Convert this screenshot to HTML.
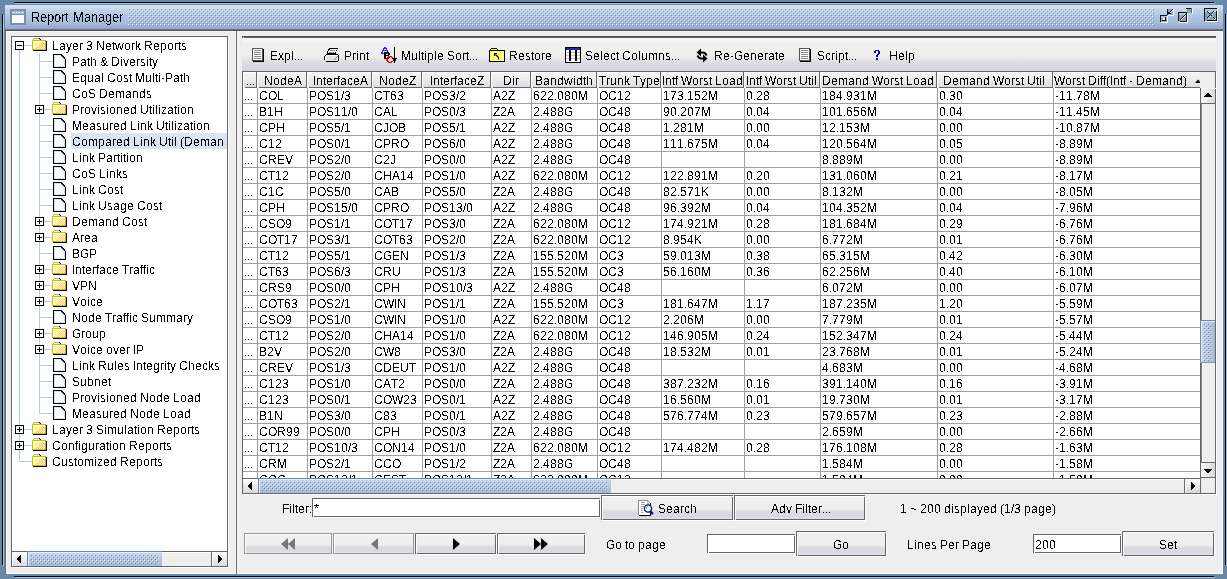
<!DOCTYPE html><html><head><meta charset="utf-8"><style>
*{margin:0;padding:0;box-sizing:border-box}
html,body{width:1227px;height:579px;overflow:hidden}
body{position:relative;background:#6589a6;font-family:"Liberation Sans",sans-serif;font-size:12px;color:#000}
.a{position:absolute}
svg.a{display:block}
.hc{position:absolute;top:0;height:16px;
 background:linear-gradient(to bottom,#f6f6f6 0px,#eeeeee 6px,#dcdde3 15px)}
</style></head><body>
<svg width="0" height="0" style="position:absolute"><defs><filter id="crisp" x="0" y="0" width="100%" height="100%" color-interpolation-filters="sRGB"><feComponentTransfer><feFuncA type="discrete" tableValues="0 0 0 0 0 0 0 0 0 0 1 1 1 1 1 1 1 1 1 1"/></feComponentTransfer></filter></defs></svg><div class="a" style="left:14px;top:2px;width:1200px;height:1px;background:#000"></div>
<div class="a" style="left:15px;top:3px;width:1200px;height:1px;background:#a6c2dc"></div>
<div class="a" style="left:14px;top:576px;width:1200px;height:1px;background:#000"></div>
<div class="a" style="left:15px;top:577px;width:1200px;height:1px;background:#a6c2dc"></div>
<div class="a" style="left:2px;top:14px;width:1px;height:551px;background:#000"></div>
<div class="a" style="left:3px;top:15px;width:1px;height:551px;background:#a6c2dc"></div>
<div class="a" style="left:1225px;top:14px;width:1px;height:551px;background:#000"></div>
<div class="a" style="left:1226px;top:15px;width:1px;height:551px;background:#a6c2dc"></div>
<div class="a" style="left:5px;top:5px;width:1218px;height:24px;background:linear-gradient(to bottom,#dae1f6 0px,#d3ddf2 1.5px,#cddaeb 3px,#bdd0e7 6px,#b0c6e3 11px,#aabedd 16px,#a3b4d7 20px,#95a5c8 24px)"></div>
<div class="a" style="left:5px;top:29px;width:1218px;height:1px;background:#62769a"></div>
<svg class="a" style="left:128px;top:8px" width="1026" height="18"><defs><pattern id="tb" width="4" height="4" patternUnits="userSpaceOnUse"><rect x="0" y="0" width="1" height="1" fill="#f4f7fc"/><rect x="2" y="2" width="1" height="1" fill="#f4f7fc"/><rect x="1" y="1" width="1" height="1" fill="#72849f"/><rect x="3" y="3" width="1" height="1" fill="#72849f"/></pattern></defs><rect width="1026" height="18" fill="url(#tb)"/></svg>
<svg class="a" style="left:10px;top:9px" width="16" height="16" shape-rendering="crispEdges"><rect x="0" y="0" width="16" height="16" rx="1" fill="#7790ab"/><rect x="2" y="2" width="12" height="3" fill="#a9bdd2"/><rect x="3" y="3" width="1" height="1" fill="#fff"/><rect x="6" y="3" width="1" height="1" fill="#fff"/><rect x="9" y="3" width="1" height="1" fill="#fff"/><rect x="12" y="3" width="1" height="1" fill="#fff"/><rect x="2" y="6" width="12" height="8" fill="#fbfcfe"/></svg>
<svg class="a" style="left:1158px;top:7px" width="62" height="17" shape-rendering="crispEdges"><rect x="2" y="8" width="7" height="1" fill="#111"/><rect x="2" y="8" width="1" height="7" fill="#111"/><rect x="3" y="9" width="6" height="6" fill="#8aa1bc"/><rect x="3" y="9" width="6" height="2" fill="#b4c6da"/><rect x="5" y="11" width="2" height="2" fill="#fff"/><rect x="7" y="10" width="1" height="4" fill="#111"/><rect x="4" y="13" width="4" height="1" fill="#111"/><rect x="9" y="9" width="1" height="7" fill="#fff"/><rect x="3" y="15" width="7" height="1" fill="#fff"/><rect x="10" y="2" width="5" height="6" fill="#8aa1bc"/><rect x="9" y="2" width="1" height="6" fill="#111"/><rect x="14" y="2" width="1" height="1" fill="#111"/><rect x="13" y="3" width="1" height="1" fill="#111"/><rect x="12" y="4" width="1" height="1" fill="#111"/><rect x="11" y="5" width="1" height="1" fill="#111"/><rect x="10" y="6" width="1" height="1" fill="#111"/><rect x="11" y="6" width="1" height="1" fill="#111"/><rect x="12" y="6" width="1" height="1" fill="#111"/><rect x="10" y="5" width="1" height="1" fill="#111"/><rect x="14" y="3" width="1" height="1" fill="#fff"/><rect x="13" y="4" width="1" height="1" fill="#fff"/><rect x="12" y="5" width="1" height="1" fill="#fff"/><rect x="15" y="2" width="1" height="7" fill="#fff"/><rect x="10" y="8" width="6" height="1" fill="#fff"/><rect x="20" y="5" width="9" height="1" fill="#111"/><rect x="20" y="5" width="1" height="9" fill="#111"/><rect x="21" y="6" width="8" height="8" fill="#8aa1bc"/><rect x="21" y="6" width="8" height="2" fill="#b4c6da"/><rect x="28" y="7" width="1" height="7" fill="#111"/><rect x="22" y="14" width="7" height="1" fill="#111"/><rect x="22" y="12" width="1" height="1" fill="#111"/><rect x="23" y="11" width="1" height="1" fill="#111"/><rect x="24" y="10" width="1" height="1" fill="#111"/><rect x="25" y="9" width="1" height="1" fill="#111"/><rect x="26" y="8" width="1" height="1" fill="#111"/><rect x="27" y="7" width="1" height="1" fill="#111"/><rect x="28" y="6" width="1" height="1" fill="#111"/><rect x="23" y="12" width="1" height="1" fill="#fff"/><rect x="24" y="11" width="1" height="1" fill="#fff"/><rect x="25" y="10" width="1" height="1" fill="#fff"/><rect x="26" y="9" width="1" height="1" fill="#fff"/><rect x="27" y="8" width="1" height="1" fill="#fff"/><rect x="29" y="6" width="1" height="9" fill="#fff"/><rect x="21" y="15" width="9" height="1" fill="#fff"/><rect x="29" y="2" width="5" height="4" fill="#8aa1bc"/><rect x="28" y="1" width="6" height="1" fill="#111"/><rect x="33" y="1" width="1" height="5" fill="#55667a"/><rect x="34" y="2" width="1" height="5" fill="#fff"/><rect x="46" y="1" width="13" height="1" fill="#111"/><rect x="46" y="1" width="1" height="13" fill="#111"/><rect x="47" y="2" width="12" height="12" fill="#8aa1bc"/><rect x="47" y="2" width="12" height="3" fill="#b4c6da"/><rect x="58" y="4" width="1" height="9" fill="#111"/><rect x="49" y="13" width="10" height="1" fill="#111"/><rect x="49" y="4" width="1" height="1" fill="#111"/><rect x="50" y="5" width="1" height="1" fill="#111"/><rect x="51" y="6" width="1" height="1" fill="#111"/><rect x="52" y="7" width="1" height="1" fill="#111"/><rect x="53" y="8" width="1" height="1" fill="#111"/><rect x="55" y="10" width="1" height="1" fill="#111"/><rect x="56" y="11" width="1" height="1" fill="#111"/><rect x="55" y="4" width="1" height="1" fill="#111"/><rect x="54" y="5" width="1" height="1" fill="#111"/><rect x="53" y="6" width="1" height="1" fill="#111"/><rect x="51" y="8" width="1" height="1" fill="#111"/><rect x="50" y="9" width="1" height="1" fill="#111"/><rect x="49" y="10" width="1" height="1" fill="#111"/><rect x="50" y="4" width="1" height="1" fill="#e8eef6"/><rect x="51" y="5" width="1" height="1" fill="#e8eef6"/><rect x="56" y="4" width="1" height="1" fill="#e8eef6"/><rect x="55" y="5" width="1" height="1" fill="#e8eef6"/><rect x="54" y="7" width="1" height="1" fill="#e8eef6"/><rect x="56" y="12" width="1" height="1" fill="#e8eef6"/><rect x="57" y="11" width="1" height="1" fill="#e8eef6"/><rect x="50" y="11" width="1" height="1" fill="#e8eef6"/><rect x="52" y="9" width="1" height="1" fill="#e8eef6"/><rect x="59" y="2" width="1" height="13" fill="#fff"/><rect x="47" y="14" width="13" height="1" fill="#fff"/></svg>
<div class="a" style="left:5px;top:30px;width:1218px;height:544px;background:#eeeeee"></div>
<div class="a" style="left:5px;top:30px;width:1218px;height:1px;background:#555"></div>
<div class="a" style="left:5px;top:30px;width:1px;height:544px;background:#6b6b6b"></div>
<div class="a" style="left:6px;top:573px;width:1217px;height:1px;background:#fff"></div>
<div class="a" style="left:1222px;top:31px;width:1px;height:543px;background:#fff"></div>
<div class="a" style="left:6px;top:31px;width:1216px;height:1px;background:#f8f8f8"></div>
<div class="a" style="left:6px;top:31px;width:1px;height:542px;background:#f8f8f8"></div>
<div class="a" style="left:12px;top:37px;width:215px;height:514px;background:#fff"></div>
<div class="a" style="left:11px;top:36px;width:217px;height:1px;background:#666666"></div>
<div class="a" style="left:11px;top:36px;width:1px;height:531px;background:#666666"></div>
<div class="a" style="left:227px;top:36px;width:1px;height:531px;background:#666666"></div>
<div class="a" style="left:11px;top:566px;width:217px;height:1px;background:#666666"></div>
<div class="a" style="left:228px;top:37px;width:1px;height:531px;background:#fff"></div>
<div class="a" style="left:12px;top:567px;width:217px;height:1px;background:#fff"></div>
<div class="a" style="left:19px;top:50px;width:1px;height:412px;background:#b3cbe6"></div>
<div class="a" style="left:39px;top:53px;width:1px;height:361px;background:#b3cbe6"></div>
<div class="a" style="left:71px;top:133px;width:156px;height:16px;background:#dae4f3"></div>
<svg class="a" style="left:15px;top:41px" width="9" height="9" shape-rendering="crispEdges"><rect x="0" y="0" width="9" height="9" fill="#000"/><rect x="1" y="1" width="7" height="7" fill="#fff"/><rect x="2" y="4" width="5" height="1" fill="#000"/></svg>
<div class="a" style="left:24px;top:45px;width:8px;height:1px;background:#b3cbe6"></div>
<svg class="a" style="left:32px;top:38px" width="16" height="14" shape-rendering="crispEdges"><rect x="0" y="2" width="14" height="10" fill="#bdbd2a"/><rect x="2" y="0" width="5" height="1" fill="#bdbd2a"/><rect x="1" y="1" width="7" height="1" fill="#bdbd2a"/><rect x="2" y="1" width="5" height="1" fill="#fffbe0"/><rect x="7" y="0" width="1" height="1" fill="#000"/><rect x="8" y="1" width="1" height="1" fill="#000"/><rect x="1" y="3" width="12" height="8" fill="#fff59c"/><rect x="1" y="3" width="12" height="1" fill="#ffffd0"/><rect x="1" y="3" width="1" height="8" fill="#ffffd0"/><rect x="10" y="4" width="1" height="1" fill="#ffc8a0"/><rect x="12" y="4" width="1" height="1" fill="#ffc8a0"/><rect x="9" y="5" width="1" height="1" fill="#ffc8a0"/><rect x="11" y="5" width="1" height="1" fill="#ffc8a0"/><rect x="8" y="6" width="1" height="1" fill="#ffc8a0"/><rect x="10" y="6" width="1" height="1" fill="#ffc8a0"/><rect x="12" y="6" width="1" height="1" fill="#ffc8a0"/><rect x="7" y="7" width="1" height="1" fill="#ffc8a0"/><rect x="9" y="7" width="1" height="1" fill="#ffc8a0"/><rect x="11" y="7" width="1" height="1" fill="#ffc8a0"/><rect x="6" y="8" width="1" height="1" fill="#ffc8a0"/><rect x="8" y="8" width="1" height="1" fill="#ffc8a0"/><rect x="10" y="8" width="1" height="1" fill="#ffc8a0"/><rect x="12" y="8" width="1" height="1" fill="#ffc8a0"/><rect x="5" y="9" width="1" height="1" fill="#ffc8a0"/><rect x="7" y="9" width="1" height="1" fill="#ffc8a0"/><rect x="9" y="9" width="1" height="1" fill="#ffc8a0"/><rect x="11" y="9" width="1" height="1" fill="#ffc8a0"/><rect x="4" y="10" width="1" height="1" fill="#ffc8a0"/><rect x="6" y="10" width="1" height="1" fill="#ffc8a0"/><rect x="8" y="10" width="1" height="1" fill="#ffc8a0"/><rect x="10" y="10" width="1" height="1" fill="#ffc8a0"/><rect x="12" y="10" width="1" height="1" fill="#ffc8a0"/><rect x="14" y="3" width="1" height="10" fill="#000"/><rect x="1" y="12" width="14" height="1" fill="#000"/></svg>
<div class="a" style="left:40px;top:61px;width:13px;height:1px;background:#b3cbe6"></div>
<svg class="a" style="left:53px;top:54px" width="13" height="14" shape-rendering="crispEdges"><rect x="0" y="0" width="9" height="1" fill="#000"/><rect x="0" y="0" width="1" height="14" fill="#000"/><rect x="0" y="13" width="13" height="1" fill="#000"/><rect x="12" y="5" width="1" height="9" fill="#000"/><rect x="1" y="1" width="8" height="12" fill="#fff"/><rect x="9" y="4" width="3" height="9" fill="#fff"/><rect x="1" y="1" width="1" height="12" fill="#cfe0f8"/><rect x="1" y="12" width="11" height="1" fill="#cfe0f8"/><rect x="11" y="5" width="1" height="8" fill="#cfe0f8"/><rect x="1" y="1" width="7" height="1" fill="#e6eefa"/><rect x="8" y="1" width="1" height="1" fill="#000"/><rect x="9" y="2" width="1" height="1" fill="#000"/><rect x="10" y="3" width="1" height="1" fill="#000"/><rect x="11" y="4" width="1" height="1" fill="#000"/><rect x="9" y="1" width="1" height="1" fill="#000"/><rect x="10" y="2" width="1" height="1" fill="#000"/><rect x="11" y="3" width="1" height="1" fill="#000"/><rect x="8" y="2" width="1" height="1" fill="#cfe0f8"/><rect x="9" y="3" width="1" height="1" fill="#cfe0f8"/><rect x="10" y="4" width="1" height="1" fill="#cfe0f8"/></svg>
<div class="a" style="left:40px;top:77px;width:13px;height:1px;background:#b3cbe6"></div>
<svg class="a" style="left:53px;top:70px" width="13" height="14" shape-rendering="crispEdges"><rect x="0" y="0" width="9" height="1" fill="#000"/><rect x="0" y="0" width="1" height="14" fill="#000"/><rect x="0" y="13" width="13" height="1" fill="#000"/><rect x="12" y="5" width="1" height="9" fill="#000"/><rect x="1" y="1" width="8" height="12" fill="#fff"/><rect x="9" y="4" width="3" height="9" fill="#fff"/><rect x="1" y="1" width="1" height="12" fill="#cfe0f8"/><rect x="1" y="12" width="11" height="1" fill="#cfe0f8"/><rect x="11" y="5" width="1" height="8" fill="#cfe0f8"/><rect x="1" y="1" width="7" height="1" fill="#e6eefa"/><rect x="8" y="1" width="1" height="1" fill="#000"/><rect x="9" y="2" width="1" height="1" fill="#000"/><rect x="10" y="3" width="1" height="1" fill="#000"/><rect x="11" y="4" width="1" height="1" fill="#000"/><rect x="9" y="1" width="1" height="1" fill="#000"/><rect x="10" y="2" width="1" height="1" fill="#000"/><rect x="11" y="3" width="1" height="1" fill="#000"/><rect x="8" y="2" width="1" height="1" fill="#cfe0f8"/><rect x="9" y="3" width="1" height="1" fill="#cfe0f8"/><rect x="10" y="4" width="1" height="1" fill="#cfe0f8"/></svg>
<div class="a" style="left:40px;top:93px;width:13px;height:1px;background:#b3cbe6"></div>
<svg class="a" style="left:53px;top:86px" width="13" height="14" shape-rendering="crispEdges"><rect x="0" y="0" width="9" height="1" fill="#000"/><rect x="0" y="0" width="1" height="14" fill="#000"/><rect x="0" y="13" width="13" height="1" fill="#000"/><rect x="12" y="5" width="1" height="9" fill="#000"/><rect x="1" y="1" width="8" height="12" fill="#fff"/><rect x="9" y="4" width="3" height="9" fill="#fff"/><rect x="1" y="1" width="1" height="12" fill="#cfe0f8"/><rect x="1" y="12" width="11" height="1" fill="#cfe0f8"/><rect x="11" y="5" width="1" height="8" fill="#cfe0f8"/><rect x="1" y="1" width="7" height="1" fill="#e6eefa"/><rect x="8" y="1" width="1" height="1" fill="#000"/><rect x="9" y="2" width="1" height="1" fill="#000"/><rect x="10" y="3" width="1" height="1" fill="#000"/><rect x="11" y="4" width="1" height="1" fill="#000"/><rect x="9" y="1" width="1" height="1" fill="#000"/><rect x="10" y="2" width="1" height="1" fill="#000"/><rect x="11" y="3" width="1" height="1" fill="#000"/><rect x="8" y="2" width="1" height="1" fill="#cfe0f8"/><rect x="9" y="3" width="1" height="1" fill="#cfe0f8"/><rect x="10" y="4" width="1" height="1" fill="#cfe0f8"/></svg>
<svg class="a" style="left:35px;top:105px" width="9" height="9" shape-rendering="crispEdges"><rect x="0" y="0" width="9" height="9" fill="#000"/><rect x="1" y="1" width="7" height="7" fill="#fff"/><rect x="2" y="4" width="5" height="1" fill="#000"/><rect x="4" y="2" width="1" height="5" fill="#000"/></svg>
<div class="a" style="left:44px;top:109px;width:8px;height:1px;background:#b3cbe6"></div>
<svg class="a" style="left:52px;top:102px" width="16" height="14" shape-rendering="crispEdges"><rect x="0" y="2" width="14" height="10" fill="#bdbd2a"/><rect x="2" y="0" width="5" height="1" fill="#bdbd2a"/><rect x="1" y="1" width="7" height="1" fill="#bdbd2a"/><rect x="2" y="1" width="5" height="1" fill="#fffbe0"/><rect x="7" y="0" width="1" height="1" fill="#000"/><rect x="8" y="1" width="1" height="1" fill="#000"/><rect x="1" y="3" width="12" height="8" fill="#fff59c"/><rect x="1" y="3" width="12" height="1" fill="#ffffd0"/><rect x="1" y="3" width="1" height="8" fill="#ffffd0"/><rect x="10" y="4" width="1" height="1" fill="#ffc8a0"/><rect x="12" y="4" width="1" height="1" fill="#ffc8a0"/><rect x="9" y="5" width="1" height="1" fill="#ffc8a0"/><rect x="11" y="5" width="1" height="1" fill="#ffc8a0"/><rect x="8" y="6" width="1" height="1" fill="#ffc8a0"/><rect x="10" y="6" width="1" height="1" fill="#ffc8a0"/><rect x="12" y="6" width="1" height="1" fill="#ffc8a0"/><rect x="7" y="7" width="1" height="1" fill="#ffc8a0"/><rect x="9" y="7" width="1" height="1" fill="#ffc8a0"/><rect x="11" y="7" width="1" height="1" fill="#ffc8a0"/><rect x="6" y="8" width="1" height="1" fill="#ffc8a0"/><rect x="8" y="8" width="1" height="1" fill="#ffc8a0"/><rect x="10" y="8" width="1" height="1" fill="#ffc8a0"/><rect x="12" y="8" width="1" height="1" fill="#ffc8a0"/><rect x="5" y="9" width="1" height="1" fill="#ffc8a0"/><rect x="7" y="9" width="1" height="1" fill="#ffc8a0"/><rect x="9" y="9" width="1" height="1" fill="#ffc8a0"/><rect x="11" y="9" width="1" height="1" fill="#ffc8a0"/><rect x="4" y="10" width="1" height="1" fill="#ffc8a0"/><rect x="6" y="10" width="1" height="1" fill="#ffc8a0"/><rect x="8" y="10" width="1" height="1" fill="#ffc8a0"/><rect x="10" y="10" width="1" height="1" fill="#ffc8a0"/><rect x="12" y="10" width="1" height="1" fill="#ffc8a0"/><rect x="14" y="3" width="1" height="10" fill="#000"/><rect x="1" y="12" width="14" height="1" fill="#000"/></svg>
<div class="a" style="left:40px;top:125px;width:13px;height:1px;background:#b3cbe6"></div>
<svg class="a" style="left:53px;top:118px" width="13" height="14" shape-rendering="crispEdges"><rect x="0" y="0" width="9" height="1" fill="#000"/><rect x="0" y="0" width="1" height="14" fill="#000"/><rect x="0" y="13" width="13" height="1" fill="#000"/><rect x="12" y="5" width="1" height="9" fill="#000"/><rect x="1" y="1" width="8" height="12" fill="#fff"/><rect x="9" y="4" width="3" height="9" fill="#fff"/><rect x="1" y="1" width="1" height="12" fill="#cfe0f8"/><rect x="1" y="12" width="11" height="1" fill="#cfe0f8"/><rect x="11" y="5" width="1" height="8" fill="#cfe0f8"/><rect x="1" y="1" width="7" height="1" fill="#e6eefa"/><rect x="8" y="1" width="1" height="1" fill="#000"/><rect x="9" y="2" width="1" height="1" fill="#000"/><rect x="10" y="3" width="1" height="1" fill="#000"/><rect x="11" y="4" width="1" height="1" fill="#000"/><rect x="9" y="1" width="1" height="1" fill="#000"/><rect x="10" y="2" width="1" height="1" fill="#000"/><rect x="11" y="3" width="1" height="1" fill="#000"/><rect x="8" y="2" width="1" height="1" fill="#cfe0f8"/><rect x="9" y="3" width="1" height="1" fill="#cfe0f8"/><rect x="10" y="4" width="1" height="1" fill="#cfe0f8"/></svg>
<div class="a" style="left:40px;top:141px;width:13px;height:1px;background:#b3cbe6"></div>
<svg class="a" style="left:53px;top:134px" width="13" height="14" shape-rendering="crispEdges"><rect x="0" y="0" width="9" height="1" fill="#000"/><rect x="0" y="0" width="1" height="14" fill="#000"/><rect x="0" y="13" width="13" height="1" fill="#000"/><rect x="12" y="5" width="1" height="9" fill="#000"/><rect x="1" y="1" width="8" height="12" fill="#fff"/><rect x="9" y="4" width="3" height="9" fill="#fff"/><rect x="1" y="1" width="1" height="12" fill="#cfe0f8"/><rect x="1" y="12" width="11" height="1" fill="#cfe0f8"/><rect x="11" y="5" width="1" height="8" fill="#cfe0f8"/><rect x="1" y="1" width="7" height="1" fill="#e6eefa"/><rect x="8" y="1" width="1" height="1" fill="#000"/><rect x="9" y="2" width="1" height="1" fill="#000"/><rect x="10" y="3" width="1" height="1" fill="#000"/><rect x="11" y="4" width="1" height="1" fill="#000"/><rect x="9" y="1" width="1" height="1" fill="#000"/><rect x="10" y="2" width="1" height="1" fill="#000"/><rect x="11" y="3" width="1" height="1" fill="#000"/><rect x="8" y="2" width="1" height="1" fill="#cfe0f8"/><rect x="9" y="3" width="1" height="1" fill="#cfe0f8"/><rect x="10" y="4" width="1" height="1" fill="#cfe0f8"/></svg>
<div class="a" style="left:40px;top:157px;width:13px;height:1px;background:#b3cbe6"></div>
<svg class="a" style="left:53px;top:150px" width="13" height="14" shape-rendering="crispEdges"><rect x="0" y="0" width="9" height="1" fill="#000"/><rect x="0" y="0" width="1" height="14" fill="#000"/><rect x="0" y="13" width="13" height="1" fill="#000"/><rect x="12" y="5" width="1" height="9" fill="#000"/><rect x="1" y="1" width="8" height="12" fill="#fff"/><rect x="9" y="4" width="3" height="9" fill="#fff"/><rect x="1" y="1" width="1" height="12" fill="#cfe0f8"/><rect x="1" y="12" width="11" height="1" fill="#cfe0f8"/><rect x="11" y="5" width="1" height="8" fill="#cfe0f8"/><rect x="1" y="1" width="7" height="1" fill="#e6eefa"/><rect x="8" y="1" width="1" height="1" fill="#000"/><rect x="9" y="2" width="1" height="1" fill="#000"/><rect x="10" y="3" width="1" height="1" fill="#000"/><rect x="11" y="4" width="1" height="1" fill="#000"/><rect x="9" y="1" width="1" height="1" fill="#000"/><rect x="10" y="2" width="1" height="1" fill="#000"/><rect x="11" y="3" width="1" height="1" fill="#000"/><rect x="8" y="2" width="1" height="1" fill="#cfe0f8"/><rect x="9" y="3" width="1" height="1" fill="#cfe0f8"/><rect x="10" y="4" width="1" height="1" fill="#cfe0f8"/></svg>
<div class="a" style="left:40px;top:173px;width:13px;height:1px;background:#b3cbe6"></div>
<svg class="a" style="left:53px;top:166px" width="13" height="14" shape-rendering="crispEdges"><rect x="0" y="0" width="9" height="1" fill="#000"/><rect x="0" y="0" width="1" height="14" fill="#000"/><rect x="0" y="13" width="13" height="1" fill="#000"/><rect x="12" y="5" width="1" height="9" fill="#000"/><rect x="1" y="1" width="8" height="12" fill="#fff"/><rect x="9" y="4" width="3" height="9" fill="#fff"/><rect x="1" y="1" width="1" height="12" fill="#cfe0f8"/><rect x="1" y="12" width="11" height="1" fill="#cfe0f8"/><rect x="11" y="5" width="1" height="8" fill="#cfe0f8"/><rect x="1" y="1" width="7" height="1" fill="#e6eefa"/><rect x="8" y="1" width="1" height="1" fill="#000"/><rect x="9" y="2" width="1" height="1" fill="#000"/><rect x="10" y="3" width="1" height="1" fill="#000"/><rect x="11" y="4" width="1" height="1" fill="#000"/><rect x="9" y="1" width="1" height="1" fill="#000"/><rect x="10" y="2" width="1" height="1" fill="#000"/><rect x="11" y="3" width="1" height="1" fill="#000"/><rect x="8" y="2" width="1" height="1" fill="#cfe0f8"/><rect x="9" y="3" width="1" height="1" fill="#cfe0f8"/><rect x="10" y="4" width="1" height="1" fill="#cfe0f8"/></svg>
<div class="a" style="left:40px;top:189px;width:13px;height:1px;background:#b3cbe6"></div>
<svg class="a" style="left:53px;top:182px" width="13" height="14" shape-rendering="crispEdges"><rect x="0" y="0" width="9" height="1" fill="#000"/><rect x="0" y="0" width="1" height="14" fill="#000"/><rect x="0" y="13" width="13" height="1" fill="#000"/><rect x="12" y="5" width="1" height="9" fill="#000"/><rect x="1" y="1" width="8" height="12" fill="#fff"/><rect x="9" y="4" width="3" height="9" fill="#fff"/><rect x="1" y="1" width="1" height="12" fill="#cfe0f8"/><rect x="1" y="12" width="11" height="1" fill="#cfe0f8"/><rect x="11" y="5" width="1" height="8" fill="#cfe0f8"/><rect x="1" y="1" width="7" height="1" fill="#e6eefa"/><rect x="8" y="1" width="1" height="1" fill="#000"/><rect x="9" y="2" width="1" height="1" fill="#000"/><rect x="10" y="3" width="1" height="1" fill="#000"/><rect x="11" y="4" width="1" height="1" fill="#000"/><rect x="9" y="1" width="1" height="1" fill="#000"/><rect x="10" y="2" width="1" height="1" fill="#000"/><rect x="11" y="3" width="1" height="1" fill="#000"/><rect x="8" y="2" width="1" height="1" fill="#cfe0f8"/><rect x="9" y="3" width="1" height="1" fill="#cfe0f8"/><rect x="10" y="4" width="1" height="1" fill="#cfe0f8"/></svg>
<div class="a" style="left:40px;top:205px;width:13px;height:1px;background:#b3cbe6"></div>
<svg class="a" style="left:53px;top:198px" width="13" height="14" shape-rendering="crispEdges"><rect x="0" y="0" width="9" height="1" fill="#000"/><rect x="0" y="0" width="1" height="14" fill="#000"/><rect x="0" y="13" width="13" height="1" fill="#000"/><rect x="12" y="5" width="1" height="9" fill="#000"/><rect x="1" y="1" width="8" height="12" fill="#fff"/><rect x="9" y="4" width="3" height="9" fill="#fff"/><rect x="1" y="1" width="1" height="12" fill="#cfe0f8"/><rect x="1" y="12" width="11" height="1" fill="#cfe0f8"/><rect x="11" y="5" width="1" height="8" fill="#cfe0f8"/><rect x="1" y="1" width="7" height="1" fill="#e6eefa"/><rect x="8" y="1" width="1" height="1" fill="#000"/><rect x="9" y="2" width="1" height="1" fill="#000"/><rect x="10" y="3" width="1" height="1" fill="#000"/><rect x="11" y="4" width="1" height="1" fill="#000"/><rect x="9" y="1" width="1" height="1" fill="#000"/><rect x="10" y="2" width="1" height="1" fill="#000"/><rect x="11" y="3" width="1" height="1" fill="#000"/><rect x="8" y="2" width="1" height="1" fill="#cfe0f8"/><rect x="9" y="3" width="1" height="1" fill="#cfe0f8"/><rect x="10" y="4" width="1" height="1" fill="#cfe0f8"/></svg>
<svg class="a" style="left:35px;top:217px" width="9" height="9" shape-rendering="crispEdges"><rect x="0" y="0" width="9" height="9" fill="#000"/><rect x="1" y="1" width="7" height="7" fill="#fff"/><rect x="2" y="4" width="5" height="1" fill="#000"/><rect x="4" y="2" width="1" height="5" fill="#000"/></svg>
<div class="a" style="left:44px;top:221px;width:8px;height:1px;background:#b3cbe6"></div>
<svg class="a" style="left:52px;top:214px" width="16" height="14" shape-rendering="crispEdges"><rect x="0" y="2" width="14" height="10" fill="#bdbd2a"/><rect x="2" y="0" width="5" height="1" fill="#bdbd2a"/><rect x="1" y="1" width="7" height="1" fill="#bdbd2a"/><rect x="2" y="1" width="5" height="1" fill="#fffbe0"/><rect x="7" y="0" width="1" height="1" fill="#000"/><rect x="8" y="1" width="1" height="1" fill="#000"/><rect x="1" y="3" width="12" height="8" fill="#fff59c"/><rect x="1" y="3" width="12" height="1" fill="#ffffd0"/><rect x="1" y="3" width="1" height="8" fill="#ffffd0"/><rect x="10" y="4" width="1" height="1" fill="#ffc8a0"/><rect x="12" y="4" width="1" height="1" fill="#ffc8a0"/><rect x="9" y="5" width="1" height="1" fill="#ffc8a0"/><rect x="11" y="5" width="1" height="1" fill="#ffc8a0"/><rect x="8" y="6" width="1" height="1" fill="#ffc8a0"/><rect x="10" y="6" width="1" height="1" fill="#ffc8a0"/><rect x="12" y="6" width="1" height="1" fill="#ffc8a0"/><rect x="7" y="7" width="1" height="1" fill="#ffc8a0"/><rect x="9" y="7" width="1" height="1" fill="#ffc8a0"/><rect x="11" y="7" width="1" height="1" fill="#ffc8a0"/><rect x="6" y="8" width="1" height="1" fill="#ffc8a0"/><rect x="8" y="8" width="1" height="1" fill="#ffc8a0"/><rect x="10" y="8" width="1" height="1" fill="#ffc8a0"/><rect x="12" y="8" width="1" height="1" fill="#ffc8a0"/><rect x="5" y="9" width="1" height="1" fill="#ffc8a0"/><rect x="7" y="9" width="1" height="1" fill="#ffc8a0"/><rect x="9" y="9" width="1" height="1" fill="#ffc8a0"/><rect x="11" y="9" width="1" height="1" fill="#ffc8a0"/><rect x="4" y="10" width="1" height="1" fill="#ffc8a0"/><rect x="6" y="10" width="1" height="1" fill="#ffc8a0"/><rect x="8" y="10" width="1" height="1" fill="#ffc8a0"/><rect x="10" y="10" width="1" height="1" fill="#ffc8a0"/><rect x="12" y="10" width="1" height="1" fill="#ffc8a0"/><rect x="14" y="3" width="1" height="10" fill="#000"/><rect x="1" y="12" width="14" height="1" fill="#000"/></svg>
<svg class="a" style="left:35px;top:233px" width="9" height="9" shape-rendering="crispEdges"><rect x="0" y="0" width="9" height="9" fill="#000"/><rect x="1" y="1" width="7" height="7" fill="#fff"/><rect x="2" y="4" width="5" height="1" fill="#000"/><rect x="4" y="2" width="1" height="5" fill="#000"/></svg>
<div class="a" style="left:44px;top:237px;width:8px;height:1px;background:#b3cbe6"></div>
<svg class="a" style="left:52px;top:230px" width="16" height="14" shape-rendering="crispEdges"><rect x="0" y="2" width="14" height="10" fill="#bdbd2a"/><rect x="2" y="0" width="5" height="1" fill="#bdbd2a"/><rect x="1" y="1" width="7" height="1" fill="#bdbd2a"/><rect x="2" y="1" width="5" height="1" fill="#fffbe0"/><rect x="7" y="0" width="1" height="1" fill="#000"/><rect x="8" y="1" width="1" height="1" fill="#000"/><rect x="1" y="3" width="12" height="8" fill="#fff59c"/><rect x="1" y="3" width="12" height="1" fill="#ffffd0"/><rect x="1" y="3" width="1" height="8" fill="#ffffd0"/><rect x="10" y="4" width="1" height="1" fill="#ffc8a0"/><rect x="12" y="4" width="1" height="1" fill="#ffc8a0"/><rect x="9" y="5" width="1" height="1" fill="#ffc8a0"/><rect x="11" y="5" width="1" height="1" fill="#ffc8a0"/><rect x="8" y="6" width="1" height="1" fill="#ffc8a0"/><rect x="10" y="6" width="1" height="1" fill="#ffc8a0"/><rect x="12" y="6" width="1" height="1" fill="#ffc8a0"/><rect x="7" y="7" width="1" height="1" fill="#ffc8a0"/><rect x="9" y="7" width="1" height="1" fill="#ffc8a0"/><rect x="11" y="7" width="1" height="1" fill="#ffc8a0"/><rect x="6" y="8" width="1" height="1" fill="#ffc8a0"/><rect x="8" y="8" width="1" height="1" fill="#ffc8a0"/><rect x="10" y="8" width="1" height="1" fill="#ffc8a0"/><rect x="12" y="8" width="1" height="1" fill="#ffc8a0"/><rect x="5" y="9" width="1" height="1" fill="#ffc8a0"/><rect x="7" y="9" width="1" height="1" fill="#ffc8a0"/><rect x="9" y="9" width="1" height="1" fill="#ffc8a0"/><rect x="11" y="9" width="1" height="1" fill="#ffc8a0"/><rect x="4" y="10" width="1" height="1" fill="#ffc8a0"/><rect x="6" y="10" width="1" height="1" fill="#ffc8a0"/><rect x="8" y="10" width="1" height="1" fill="#ffc8a0"/><rect x="10" y="10" width="1" height="1" fill="#ffc8a0"/><rect x="12" y="10" width="1" height="1" fill="#ffc8a0"/><rect x="14" y="3" width="1" height="10" fill="#000"/><rect x="1" y="12" width="14" height="1" fill="#000"/></svg>
<div class="a" style="left:40px;top:253px;width:13px;height:1px;background:#b3cbe6"></div>
<svg class="a" style="left:53px;top:246px" width="13" height="14" shape-rendering="crispEdges"><rect x="0" y="0" width="9" height="1" fill="#000"/><rect x="0" y="0" width="1" height="14" fill="#000"/><rect x="0" y="13" width="13" height="1" fill="#000"/><rect x="12" y="5" width="1" height="9" fill="#000"/><rect x="1" y="1" width="8" height="12" fill="#fff"/><rect x="9" y="4" width="3" height="9" fill="#fff"/><rect x="1" y="1" width="1" height="12" fill="#cfe0f8"/><rect x="1" y="12" width="11" height="1" fill="#cfe0f8"/><rect x="11" y="5" width="1" height="8" fill="#cfe0f8"/><rect x="1" y="1" width="7" height="1" fill="#e6eefa"/><rect x="8" y="1" width="1" height="1" fill="#000"/><rect x="9" y="2" width="1" height="1" fill="#000"/><rect x="10" y="3" width="1" height="1" fill="#000"/><rect x="11" y="4" width="1" height="1" fill="#000"/><rect x="9" y="1" width="1" height="1" fill="#000"/><rect x="10" y="2" width="1" height="1" fill="#000"/><rect x="11" y="3" width="1" height="1" fill="#000"/><rect x="8" y="2" width="1" height="1" fill="#cfe0f8"/><rect x="9" y="3" width="1" height="1" fill="#cfe0f8"/><rect x="10" y="4" width="1" height="1" fill="#cfe0f8"/></svg>
<svg class="a" style="left:35px;top:265px" width="9" height="9" shape-rendering="crispEdges"><rect x="0" y="0" width="9" height="9" fill="#000"/><rect x="1" y="1" width="7" height="7" fill="#fff"/><rect x="2" y="4" width="5" height="1" fill="#000"/><rect x="4" y="2" width="1" height="5" fill="#000"/></svg>
<div class="a" style="left:44px;top:269px;width:8px;height:1px;background:#b3cbe6"></div>
<svg class="a" style="left:52px;top:262px" width="16" height="14" shape-rendering="crispEdges"><rect x="0" y="2" width="14" height="10" fill="#bdbd2a"/><rect x="2" y="0" width="5" height="1" fill="#bdbd2a"/><rect x="1" y="1" width="7" height="1" fill="#bdbd2a"/><rect x="2" y="1" width="5" height="1" fill="#fffbe0"/><rect x="7" y="0" width="1" height="1" fill="#000"/><rect x="8" y="1" width="1" height="1" fill="#000"/><rect x="1" y="3" width="12" height="8" fill="#fff59c"/><rect x="1" y="3" width="12" height="1" fill="#ffffd0"/><rect x="1" y="3" width="1" height="8" fill="#ffffd0"/><rect x="10" y="4" width="1" height="1" fill="#ffc8a0"/><rect x="12" y="4" width="1" height="1" fill="#ffc8a0"/><rect x="9" y="5" width="1" height="1" fill="#ffc8a0"/><rect x="11" y="5" width="1" height="1" fill="#ffc8a0"/><rect x="8" y="6" width="1" height="1" fill="#ffc8a0"/><rect x="10" y="6" width="1" height="1" fill="#ffc8a0"/><rect x="12" y="6" width="1" height="1" fill="#ffc8a0"/><rect x="7" y="7" width="1" height="1" fill="#ffc8a0"/><rect x="9" y="7" width="1" height="1" fill="#ffc8a0"/><rect x="11" y="7" width="1" height="1" fill="#ffc8a0"/><rect x="6" y="8" width="1" height="1" fill="#ffc8a0"/><rect x="8" y="8" width="1" height="1" fill="#ffc8a0"/><rect x="10" y="8" width="1" height="1" fill="#ffc8a0"/><rect x="12" y="8" width="1" height="1" fill="#ffc8a0"/><rect x="5" y="9" width="1" height="1" fill="#ffc8a0"/><rect x="7" y="9" width="1" height="1" fill="#ffc8a0"/><rect x="9" y="9" width="1" height="1" fill="#ffc8a0"/><rect x="11" y="9" width="1" height="1" fill="#ffc8a0"/><rect x="4" y="10" width="1" height="1" fill="#ffc8a0"/><rect x="6" y="10" width="1" height="1" fill="#ffc8a0"/><rect x="8" y="10" width="1" height="1" fill="#ffc8a0"/><rect x="10" y="10" width="1" height="1" fill="#ffc8a0"/><rect x="12" y="10" width="1" height="1" fill="#ffc8a0"/><rect x="14" y="3" width="1" height="10" fill="#000"/><rect x="1" y="12" width="14" height="1" fill="#000"/></svg>
<svg class="a" style="left:35px;top:281px" width="9" height="9" shape-rendering="crispEdges"><rect x="0" y="0" width="9" height="9" fill="#000"/><rect x="1" y="1" width="7" height="7" fill="#fff"/><rect x="2" y="4" width="5" height="1" fill="#000"/><rect x="4" y="2" width="1" height="5" fill="#000"/></svg>
<div class="a" style="left:44px;top:285px;width:8px;height:1px;background:#b3cbe6"></div>
<svg class="a" style="left:52px;top:278px" width="16" height="14" shape-rendering="crispEdges"><rect x="0" y="2" width="14" height="10" fill="#bdbd2a"/><rect x="2" y="0" width="5" height="1" fill="#bdbd2a"/><rect x="1" y="1" width="7" height="1" fill="#bdbd2a"/><rect x="2" y="1" width="5" height="1" fill="#fffbe0"/><rect x="7" y="0" width="1" height="1" fill="#000"/><rect x="8" y="1" width="1" height="1" fill="#000"/><rect x="1" y="3" width="12" height="8" fill="#fff59c"/><rect x="1" y="3" width="12" height="1" fill="#ffffd0"/><rect x="1" y="3" width="1" height="8" fill="#ffffd0"/><rect x="10" y="4" width="1" height="1" fill="#ffc8a0"/><rect x="12" y="4" width="1" height="1" fill="#ffc8a0"/><rect x="9" y="5" width="1" height="1" fill="#ffc8a0"/><rect x="11" y="5" width="1" height="1" fill="#ffc8a0"/><rect x="8" y="6" width="1" height="1" fill="#ffc8a0"/><rect x="10" y="6" width="1" height="1" fill="#ffc8a0"/><rect x="12" y="6" width="1" height="1" fill="#ffc8a0"/><rect x="7" y="7" width="1" height="1" fill="#ffc8a0"/><rect x="9" y="7" width="1" height="1" fill="#ffc8a0"/><rect x="11" y="7" width="1" height="1" fill="#ffc8a0"/><rect x="6" y="8" width="1" height="1" fill="#ffc8a0"/><rect x="8" y="8" width="1" height="1" fill="#ffc8a0"/><rect x="10" y="8" width="1" height="1" fill="#ffc8a0"/><rect x="12" y="8" width="1" height="1" fill="#ffc8a0"/><rect x="5" y="9" width="1" height="1" fill="#ffc8a0"/><rect x="7" y="9" width="1" height="1" fill="#ffc8a0"/><rect x="9" y="9" width="1" height="1" fill="#ffc8a0"/><rect x="11" y="9" width="1" height="1" fill="#ffc8a0"/><rect x="4" y="10" width="1" height="1" fill="#ffc8a0"/><rect x="6" y="10" width="1" height="1" fill="#ffc8a0"/><rect x="8" y="10" width="1" height="1" fill="#ffc8a0"/><rect x="10" y="10" width="1" height="1" fill="#ffc8a0"/><rect x="12" y="10" width="1" height="1" fill="#ffc8a0"/><rect x="14" y="3" width="1" height="10" fill="#000"/><rect x="1" y="12" width="14" height="1" fill="#000"/></svg>
<svg class="a" style="left:35px;top:297px" width="9" height="9" shape-rendering="crispEdges"><rect x="0" y="0" width="9" height="9" fill="#000"/><rect x="1" y="1" width="7" height="7" fill="#fff"/><rect x="2" y="4" width="5" height="1" fill="#000"/><rect x="4" y="2" width="1" height="5" fill="#000"/></svg>
<div class="a" style="left:44px;top:301px;width:8px;height:1px;background:#b3cbe6"></div>
<svg class="a" style="left:52px;top:294px" width="16" height="14" shape-rendering="crispEdges"><rect x="0" y="2" width="14" height="10" fill="#bdbd2a"/><rect x="2" y="0" width="5" height="1" fill="#bdbd2a"/><rect x="1" y="1" width="7" height="1" fill="#bdbd2a"/><rect x="2" y="1" width="5" height="1" fill="#fffbe0"/><rect x="7" y="0" width="1" height="1" fill="#000"/><rect x="8" y="1" width="1" height="1" fill="#000"/><rect x="1" y="3" width="12" height="8" fill="#fff59c"/><rect x="1" y="3" width="12" height="1" fill="#ffffd0"/><rect x="1" y="3" width="1" height="8" fill="#ffffd0"/><rect x="10" y="4" width="1" height="1" fill="#ffc8a0"/><rect x="12" y="4" width="1" height="1" fill="#ffc8a0"/><rect x="9" y="5" width="1" height="1" fill="#ffc8a0"/><rect x="11" y="5" width="1" height="1" fill="#ffc8a0"/><rect x="8" y="6" width="1" height="1" fill="#ffc8a0"/><rect x="10" y="6" width="1" height="1" fill="#ffc8a0"/><rect x="12" y="6" width="1" height="1" fill="#ffc8a0"/><rect x="7" y="7" width="1" height="1" fill="#ffc8a0"/><rect x="9" y="7" width="1" height="1" fill="#ffc8a0"/><rect x="11" y="7" width="1" height="1" fill="#ffc8a0"/><rect x="6" y="8" width="1" height="1" fill="#ffc8a0"/><rect x="8" y="8" width="1" height="1" fill="#ffc8a0"/><rect x="10" y="8" width="1" height="1" fill="#ffc8a0"/><rect x="12" y="8" width="1" height="1" fill="#ffc8a0"/><rect x="5" y="9" width="1" height="1" fill="#ffc8a0"/><rect x="7" y="9" width="1" height="1" fill="#ffc8a0"/><rect x="9" y="9" width="1" height="1" fill="#ffc8a0"/><rect x="11" y="9" width="1" height="1" fill="#ffc8a0"/><rect x="4" y="10" width="1" height="1" fill="#ffc8a0"/><rect x="6" y="10" width="1" height="1" fill="#ffc8a0"/><rect x="8" y="10" width="1" height="1" fill="#ffc8a0"/><rect x="10" y="10" width="1" height="1" fill="#ffc8a0"/><rect x="12" y="10" width="1" height="1" fill="#ffc8a0"/><rect x="14" y="3" width="1" height="10" fill="#000"/><rect x="1" y="12" width="14" height="1" fill="#000"/></svg>
<div class="a" style="left:40px;top:317px;width:13px;height:1px;background:#b3cbe6"></div>
<svg class="a" style="left:53px;top:310px" width="13" height="14" shape-rendering="crispEdges"><rect x="0" y="0" width="9" height="1" fill="#000"/><rect x="0" y="0" width="1" height="14" fill="#000"/><rect x="0" y="13" width="13" height="1" fill="#000"/><rect x="12" y="5" width="1" height="9" fill="#000"/><rect x="1" y="1" width="8" height="12" fill="#fff"/><rect x="9" y="4" width="3" height="9" fill="#fff"/><rect x="1" y="1" width="1" height="12" fill="#cfe0f8"/><rect x="1" y="12" width="11" height="1" fill="#cfe0f8"/><rect x="11" y="5" width="1" height="8" fill="#cfe0f8"/><rect x="1" y="1" width="7" height="1" fill="#e6eefa"/><rect x="8" y="1" width="1" height="1" fill="#000"/><rect x="9" y="2" width="1" height="1" fill="#000"/><rect x="10" y="3" width="1" height="1" fill="#000"/><rect x="11" y="4" width="1" height="1" fill="#000"/><rect x="9" y="1" width="1" height="1" fill="#000"/><rect x="10" y="2" width="1" height="1" fill="#000"/><rect x="11" y="3" width="1" height="1" fill="#000"/><rect x="8" y="2" width="1" height="1" fill="#cfe0f8"/><rect x="9" y="3" width="1" height="1" fill="#cfe0f8"/><rect x="10" y="4" width="1" height="1" fill="#cfe0f8"/></svg>
<svg class="a" style="left:35px;top:329px" width="9" height="9" shape-rendering="crispEdges"><rect x="0" y="0" width="9" height="9" fill="#000"/><rect x="1" y="1" width="7" height="7" fill="#fff"/><rect x="2" y="4" width="5" height="1" fill="#000"/><rect x="4" y="2" width="1" height="5" fill="#000"/></svg>
<div class="a" style="left:44px;top:333px;width:8px;height:1px;background:#b3cbe6"></div>
<svg class="a" style="left:52px;top:326px" width="16" height="14" shape-rendering="crispEdges"><rect x="0" y="2" width="14" height="10" fill="#bdbd2a"/><rect x="2" y="0" width="5" height="1" fill="#bdbd2a"/><rect x="1" y="1" width="7" height="1" fill="#bdbd2a"/><rect x="2" y="1" width="5" height="1" fill="#fffbe0"/><rect x="7" y="0" width="1" height="1" fill="#000"/><rect x="8" y="1" width="1" height="1" fill="#000"/><rect x="1" y="3" width="12" height="8" fill="#fff59c"/><rect x="1" y="3" width="12" height="1" fill="#ffffd0"/><rect x="1" y="3" width="1" height="8" fill="#ffffd0"/><rect x="10" y="4" width="1" height="1" fill="#ffc8a0"/><rect x="12" y="4" width="1" height="1" fill="#ffc8a0"/><rect x="9" y="5" width="1" height="1" fill="#ffc8a0"/><rect x="11" y="5" width="1" height="1" fill="#ffc8a0"/><rect x="8" y="6" width="1" height="1" fill="#ffc8a0"/><rect x="10" y="6" width="1" height="1" fill="#ffc8a0"/><rect x="12" y="6" width="1" height="1" fill="#ffc8a0"/><rect x="7" y="7" width="1" height="1" fill="#ffc8a0"/><rect x="9" y="7" width="1" height="1" fill="#ffc8a0"/><rect x="11" y="7" width="1" height="1" fill="#ffc8a0"/><rect x="6" y="8" width="1" height="1" fill="#ffc8a0"/><rect x="8" y="8" width="1" height="1" fill="#ffc8a0"/><rect x="10" y="8" width="1" height="1" fill="#ffc8a0"/><rect x="12" y="8" width="1" height="1" fill="#ffc8a0"/><rect x="5" y="9" width="1" height="1" fill="#ffc8a0"/><rect x="7" y="9" width="1" height="1" fill="#ffc8a0"/><rect x="9" y="9" width="1" height="1" fill="#ffc8a0"/><rect x="11" y="9" width="1" height="1" fill="#ffc8a0"/><rect x="4" y="10" width="1" height="1" fill="#ffc8a0"/><rect x="6" y="10" width="1" height="1" fill="#ffc8a0"/><rect x="8" y="10" width="1" height="1" fill="#ffc8a0"/><rect x="10" y="10" width="1" height="1" fill="#ffc8a0"/><rect x="12" y="10" width="1" height="1" fill="#ffc8a0"/><rect x="14" y="3" width="1" height="10" fill="#000"/><rect x="1" y="12" width="14" height="1" fill="#000"/></svg>
<svg class="a" style="left:35px;top:345px" width="9" height="9" shape-rendering="crispEdges"><rect x="0" y="0" width="9" height="9" fill="#000"/><rect x="1" y="1" width="7" height="7" fill="#fff"/><rect x="2" y="4" width="5" height="1" fill="#000"/><rect x="4" y="2" width="1" height="5" fill="#000"/></svg>
<div class="a" style="left:44px;top:349px;width:8px;height:1px;background:#b3cbe6"></div>
<svg class="a" style="left:52px;top:342px" width="16" height="14" shape-rendering="crispEdges"><rect x="0" y="2" width="14" height="10" fill="#bdbd2a"/><rect x="2" y="0" width="5" height="1" fill="#bdbd2a"/><rect x="1" y="1" width="7" height="1" fill="#bdbd2a"/><rect x="2" y="1" width="5" height="1" fill="#fffbe0"/><rect x="7" y="0" width="1" height="1" fill="#000"/><rect x="8" y="1" width="1" height="1" fill="#000"/><rect x="1" y="3" width="12" height="8" fill="#fff59c"/><rect x="1" y="3" width="12" height="1" fill="#ffffd0"/><rect x="1" y="3" width="1" height="8" fill="#ffffd0"/><rect x="10" y="4" width="1" height="1" fill="#ffc8a0"/><rect x="12" y="4" width="1" height="1" fill="#ffc8a0"/><rect x="9" y="5" width="1" height="1" fill="#ffc8a0"/><rect x="11" y="5" width="1" height="1" fill="#ffc8a0"/><rect x="8" y="6" width="1" height="1" fill="#ffc8a0"/><rect x="10" y="6" width="1" height="1" fill="#ffc8a0"/><rect x="12" y="6" width="1" height="1" fill="#ffc8a0"/><rect x="7" y="7" width="1" height="1" fill="#ffc8a0"/><rect x="9" y="7" width="1" height="1" fill="#ffc8a0"/><rect x="11" y="7" width="1" height="1" fill="#ffc8a0"/><rect x="6" y="8" width="1" height="1" fill="#ffc8a0"/><rect x="8" y="8" width="1" height="1" fill="#ffc8a0"/><rect x="10" y="8" width="1" height="1" fill="#ffc8a0"/><rect x="12" y="8" width="1" height="1" fill="#ffc8a0"/><rect x="5" y="9" width="1" height="1" fill="#ffc8a0"/><rect x="7" y="9" width="1" height="1" fill="#ffc8a0"/><rect x="9" y="9" width="1" height="1" fill="#ffc8a0"/><rect x="11" y="9" width="1" height="1" fill="#ffc8a0"/><rect x="4" y="10" width="1" height="1" fill="#ffc8a0"/><rect x="6" y="10" width="1" height="1" fill="#ffc8a0"/><rect x="8" y="10" width="1" height="1" fill="#ffc8a0"/><rect x="10" y="10" width="1" height="1" fill="#ffc8a0"/><rect x="12" y="10" width="1" height="1" fill="#ffc8a0"/><rect x="14" y="3" width="1" height="10" fill="#000"/><rect x="1" y="12" width="14" height="1" fill="#000"/></svg>
<div class="a" style="left:40px;top:365px;width:13px;height:1px;background:#b3cbe6"></div>
<svg class="a" style="left:53px;top:358px" width="13" height="14" shape-rendering="crispEdges"><rect x="0" y="0" width="9" height="1" fill="#000"/><rect x="0" y="0" width="1" height="14" fill="#000"/><rect x="0" y="13" width="13" height="1" fill="#000"/><rect x="12" y="5" width="1" height="9" fill="#000"/><rect x="1" y="1" width="8" height="12" fill="#fff"/><rect x="9" y="4" width="3" height="9" fill="#fff"/><rect x="1" y="1" width="1" height="12" fill="#cfe0f8"/><rect x="1" y="12" width="11" height="1" fill="#cfe0f8"/><rect x="11" y="5" width="1" height="8" fill="#cfe0f8"/><rect x="1" y="1" width="7" height="1" fill="#e6eefa"/><rect x="8" y="1" width="1" height="1" fill="#000"/><rect x="9" y="2" width="1" height="1" fill="#000"/><rect x="10" y="3" width="1" height="1" fill="#000"/><rect x="11" y="4" width="1" height="1" fill="#000"/><rect x="9" y="1" width="1" height="1" fill="#000"/><rect x="10" y="2" width="1" height="1" fill="#000"/><rect x="11" y="3" width="1" height="1" fill="#000"/><rect x="8" y="2" width="1" height="1" fill="#cfe0f8"/><rect x="9" y="3" width="1" height="1" fill="#cfe0f8"/><rect x="10" y="4" width="1" height="1" fill="#cfe0f8"/></svg>
<div class="a" style="left:40px;top:381px;width:13px;height:1px;background:#b3cbe6"></div>
<svg class="a" style="left:53px;top:374px" width="13" height="14" shape-rendering="crispEdges"><rect x="0" y="0" width="9" height="1" fill="#000"/><rect x="0" y="0" width="1" height="14" fill="#000"/><rect x="0" y="13" width="13" height="1" fill="#000"/><rect x="12" y="5" width="1" height="9" fill="#000"/><rect x="1" y="1" width="8" height="12" fill="#fff"/><rect x="9" y="4" width="3" height="9" fill="#fff"/><rect x="1" y="1" width="1" height="12" fill="#cfe0f8"/><rect x="1" y="12" width="11" height="1" fill="#cfe0f8"/><rect x="11" y="5" width="1" height="8" fill="#cfe0f8"/><rect x="1" y="1" width="7" height="1" fill="#e6eefa"/><rect x="8" y="1" width="1" height="1" fill="#000"/><rect x="9" y="2" width="1" height="1" fill="#000"/><rect x="10" y="3" width="1" height="1" fill="#000"/><rect x="11" y="4" width="1" height="1" fill="#000"/><rect x="9" y="1" width="1" height="1" fill="#000"/><rect x="10" y="2" width="1" height="1" fill="#000"/><rect x="11" y="3" width="1" height="1" fill="#000"/><rect x="8" y="2" width="1" height="1" fill="#cfe0f8"/><rect x="9" y="3" width="1" height="1" fill="#cfe0f8"/><rect x="10" y="4" width="1" height="1" fill="#cfe0f8"/></svg>
<div class="a" style="left:40px;top:397px;width:13px;height:1px;background:#b3cbe6"></div>
<svg class="a" style="left:53px;top:390px" width="13" height="14" shape-rendering="crispEdges"><rect x="0" y="0" width="9" height="1" fill="#000"/><rect x="0" y="0" width="1" height="14" fill="#000"/><rect x="0" y="13" width="13" height="1" fill="#000"/><rect x="12" y="5" width="1" height="9" fill="#000"/><rect x="1" y="1" width="8" height="12" fill="#fff"/><rect x="9" y="4" width="3" height="9" fill="#fff"/><rect x="1" y="1" width="1" height="12" fill="#cfe0f8"/><rect x="1" y="12" width="11" height="1" fill="#cfe0f8"/><rect x="11" y="5" width="1" height="8" fill="#cfe0f8"/><rect x="1" y="1" width="7" height="1" fill="#e6eefa"/><rect x="8" y="1" width="1" height="1" fill="#000"/><rect x="9" y="2" width="1" height="1" fill="#000"/><rect x="10" y="3" width="1" height="1" fill="#000"/><rect x="11" y="4" width="1" height="1" fill="#000"/><rect x="9" y="1" width="1" height="1" fill="#000"/><rect x="10" y="2" width="1" height="1" fill="#000"/><rect x="11" y="3" width="1" height="1" fill="#000"/><rect x="8" y="2" width="1" height="1" fill="#cfe0f8"/><rect x="9" y="3" width="1" height="1" fill="#cfe0f8"/><rect x="10" y="4" width="1" height="1" fill="#cfe0f8"/></svg>
<div class="a" style="left:40px;top:413px;width:13px;height:1px;background:#b3cbe6"></div>
<svg class="a" style="left:53px;top:406px" width="13" height="14" shape-rendering="crispEdges"><rect x="0" y="0" width="9" height="1" fill="#000"/><rect x="0" y="0" width="1" height="14" fill="#000"/><rect x="0" y="13" width="13" height="1" fill="#000"/><rect x="12" y="5" width="1" height="9" fill="#000"/><rect x="1" y="1" width="8" height="12" fill="#fff"/><rect x="9" y="4" width="3" height="9" fill="#fff"/><rect x="1" y="1" width="1" height="12" fill="#cfe0f8"/><rect x="1" y="12" width="11" height="1" fill="#cfe0f8"/><rect x="11" y="5" width="1" height="8" fill="#cfe0f8"/><rect x="1" y="1" width="7" height="1" fill="#e6eefa"/><rect x="8" y="1" width="1" height="1" fill="#000"/><rect x="9" y="2" width="1" height="1" fill="#000"/><rect x="10" y="3" width="1" height="1" fill="#000"/><rect x="11" y="4" width="1" height="1" fill="#000"/><rect x="9" y="1" width="1" height="1" fill="#000"/><rect x="10" y="2" width="1" height="1" fill="#000"/><rect x="11" y="3" width="1" height="1" fill="#000"/><rect x="8" y="2" width="1" height="1" fill="#cfe0f8"/><rect x="9" y="3" width="1" height="1" fill="#cfe0f8"/><rect x="10" y="4" width="1" height="1" fill="#cfe0f8"/></svg>
<svg class="a" style="left:15px;top:425px" width="9" height="9" shape-rendering="crispEdges"><rect x="0" y="0" width="9" height="9" fill="#000"/><rect x="1" y="1" width="7" height="7" fill="#fff"/><rect x="2" y="4" width="5" height="1" fill="#000"/><rect x="4" y="2" width="1" height="5" fill="#000"/></svg>
<div class="a" style="left:24px;top:429px;width:8px;height:1px;background:#b3cbe6"></div>
<svg class="a" style="left:32px;top:422px" width="16" height="14" shape-rendering="crispEdges"><rect x="0" y="2" width="14" height="10" fill="#bdbd2a"/><rect x="2" y="0" width="5" height="1" fill="#bdbd2a"/><rect x="1" y="1" width="7" height="1" fill="#bdbd2a"/><rect x="2" y="1" width="5" height="1" fill="#fffbe0"/><rect x="7" y="0" width="1" height="1" fill="#000"/><rect x="8" y="1" width="1" height="1" fill="#000"/><rect x="1" y="3" width="12" height="8" fill="#fff59c"/><rect x="1" y="3" width="12" height="1" fill="#ffffd0"/><rect x="1" y="3" width="1" height="8" fill="#ffffd0"/><rect x="10" y="4" width="1" height="1" fill="#ffc8a0"/><rect x="12" y="4" width="1" height="1" fill="#ffc8a0"/><rect x="9" y="5" width="1" height="1" fill="#ffc8a0"/><rect x="11" y="5" width="1" height="1" fill="#ffc8a0"/><rect x="8" y="6" width="1" height="1" fill="#ffc8a0"/><rect x="10" y="6" width="1" height="1" fill="#ffc8a0"/><rect x="12" y="6" width="1" height="1" fill="#ffc8a0"/><rect x="7" y="7" width="1" height="1" fill="#ffc8a0"/><rect x="9" y="7" width="1" height="1" fill="#ffc8a0"/><rect x="11" y="7" width="1" height="1" fill="#ffc8a0"/><rect x="6" y="8" width="1" height="1" fill="#ffc8a0"/><rect x="8" y="8" width="1" height="1" fill="#ffc8a0"/><rect x="10" y="8" width="1" height="1" fill="#ffc8a0"/><rect x="12" y="8" width="1" height="1" fill="#ffc8a0"/><rect x="5" y="9" width="1" height="1" fill="#ffc8a0"/><rect x="7" y="9" width="1" height="1" fill="#ffc8a0"/><rect x="9" y="9" width="1" height="1" fill="#ffc8a0"/><rect x="11" y="9" width="1" height="1" fill="#ffc8a0"/><rect x="4" y="10" width="1" height="1" fill="#ffc8a0"/><rect x="6" y="10" width="1" height="1" fill="#ffc8a0"/><rect x="8" y="10" width="1" height="1" fill="#ffc8a0"/><rect x="10" y="10" width="1" height="1" fill="#ffc8a0"/><rect x="12" y="10" width="1" height="1" fill="#ffc8a0"/><rect x="14" y="3" width="1" height="10" fill="#000"/><rect x="1" y="12" width="14" height="1" fill="#000"/></svg>
<svg class="a" style="left:15px;top:441px" width="9" height="9" shape-rendering="crispEdges"><rect x="0" y="0" width="9" height="9" fill="#000"/><rect x="1" y="1" width="7" height="7" fill="#fff"/><rect x="2" y="4" width="5" height="1" fill="#000"/><rect x="4" y="2" width="1" height="5" fill="#000"/></svg>
<div class="a" style="left:24px;top:445px;width:8px;height:1px;background:#b3cbe6"></div>
<svg class="a" style="left:32px;top:438px" width="16" height="14" shape-rendering="crispEdges"><rect x="0" y="2" width="14" height="10" fill="#bdbd2a"/><rect x="2" y="0" width="5" height="1" fill="#bdbd2a"/><rect x="1" y="1" width="7" height="1" fill="#bdbd2a"/><rect x="2" y="1" width="5" height="1" fill="#fffbe0"/><rect x="7" y="0" width="1" height="1" fill="#000"/><rect x="8" y="1" width="1" height="1" fill="#000"/><rect x="1" y="3" width="12" height="8" fill="#fff59c"/><rect x="1" y="3" width="12" height="1" fill="#ffffd0"/><rect x="1" y="3" width="1" height="8" fill="#ffffd0"/><rect x="10" y="4" width="1" height="1" fill="#ffc8a0"/><rect x="12" y="4" width="1" height="1" fill="#ffc8a0"/><rect x="9" y="5" width="1" height="1" fill="#ffc8a0"/><rect x="11" y="5" width="1" height="1" fill="#ffc8a0"/><rect x="8" y="6" width="1" height="1" fill="#ffc8a0"/><rect x="10" y="6" width="1" height="1" fill="#ffc8a0"/><rect x="12" y="6" width="1" height="1" fill="#ffc8a0"/><rect x="7" y="7" width="1" height="1" fill="#ffc8a0"/><rect x="9" y="7" width="1" height="1" fill="#ffc8a0"/><rect x="11" y="7" width="1" height="1" fill="#ffc8a0"/><rect x="6" y="8" width="1" height="1" fill="#ffc8a0"/><rect x="8" y="8" width="1" height="1" fill="#ffc8a0"/><rect x="10" y="8" width="1" height="1" fill="#ffc8a0"/><rect x="12" y="8" width="1" height="1" fill="#ffc8a0"/><rect x="5" y="9" width="1" height="1" fill="#ffc8a0"/><rect x="7" y="9" width="1" height="1" fill="#ffc8a0"/><rect x="9" y="9" width="1" height="1" fill="#ffc8a0"/><rect x="11" y="9" width="1" height="1" fill="#ffc8a0"/><rect x="4" y="10" width="1" height="1" fill="#ffc8a0"/><rect x="6" y="10" width="1" height="1" fill="#ffc8a0"/><rect x="8" y="10" width="1" height="1" fill="#ffc8a0"/><rect x="10" y="10" width="1" height="1" fill="#ffc8a0"/><rect x="12" y="10" width="1" height="1" fill="#ffc8a0"/><rect x="14" y="3" width="1" height="10" fill="#000"/><rect x="1" y="12" width="14" height="1" fill="#000"/></svg>
<div class="a" style="left:20px;top:461px;width:12px;height:1px;background:#b3cbe6"></div>
<svg class="a" style="left:32px;top:454px" width="16" height="14" shape-rendering="crispEdges"><rect x="0" y="2" width="14" height="10" fill="#bdbd2a"/><rect x="2" y="0" width="5" height="1" fill="#bdbd2a"/><rect x="1" y="1" width="7" height="1" fill="#bdbd2a"/><rect x="2" y="1" width="5" height="1" fill="#fffbe0"/><rect x="7" y="0" width="1" height="1" fill="#000"/><rect x="8" y="1" width="1" height="1" fill="#000"/><rect x="1" y="3" width="12" height="8" fill="#fff59c"/><rect x="1" y="3" width="12" height="1" fill="#ffffd0"/><rect x="1" y="3" width="1" height="8" fill="#ffffd0"/><rect x="10" y="4" width="1" height="1" fill="#ffc8a0"/><rect x="12" y="4" width="1" height="1" fill="#ffc8a0"/><rect x="9" y="5" width="1" height="1" fill="#ffc8a0"/><rect x="11" y="5" width="1" height="1" fill="#ffc8a0"/><rect x="8" y="6" width="1" height="1" fill="#ffc8a0"/><rect x="10" y="6" width="1" height="1" fill="#ffc8a0"/><rect x="12" y="6" width="1" height="1" fill="#ffc8a0"/><rect x="7" y="7" width="1" height="1" fill="#ffc8a0"/><rect x="9" y="7" width="1" height="1" fill="#ffc8a0"/><rect x="11" y="7" width="1" height="1" fill="#ffc8a0"/><rect x="6" y="8" width="1" height="1" fill="#ffc8a0"/><rect x="8" y="8" width="1" height="1" fill="#ffc8a0"/><rect x="10" y="8" width="1" height="1" fill="#ffc8a0"/><rect x="12" y="8" width="1" height="1" fill="#ffc8a0"/><rect x="5" y="9" width="1" height="1" fill="#ffc8a0"/><rect x="7" y="9" width="1" height="1" fill="#ffc8a0"/><rect x="9" y="9" width="1" height="1" fill="#ffc8a0"/><rect x="11" y="9" width="1" height="1" fill="#ffc8a0"/><rect x="4" y="10" width="1" height="1" fill="#ffc8a0"/><rect x="6" y="10" width="1" height="1" fill="#ffc8a0"/><rect x="8" y="10" width="1" height="1" fill="#ffc8a0"/><rect x="10" y="10" width="1" height="1" fill="#ffc8a0"/><rect x="12" y="10" width="1" height="1" fill="#ffc8a0"/><rect x="14" y="3" width="1" height="10" fill="#000"/><rect x="1" y="12" width="14" height="1" fill="#000"/></svg>
<div class="a" style="left:12px;top:551px;width:15px;height:1px;background:#666666"></div>
<div class="a" style="left:12px;top:552px;width:15px;height:14px;background:linear-gradient(to bottom,#fff 0px,#f0f0f0 6px,#dcdce0 14px)"></div>
<div class="a" style="left:12px;top:552px;width:15px;height:1px;background:#fff"></div>
<div class="a" style="left:12px;top:552px;width:1px;height:14px;background:#fff"></div>
<svg class="a" style="left:17px;top:555px" width="4" height="8" shape-rendering="crispEdges"><rect x="3" y="0" width="1" height="1" fill="#000"/><rect x="2" y="1" width="2" height="1" fill="#000"/><rect x="1" y="2" width="3" height="1" fill="#000"/><rect x="0" y="3" width="4" height="1" fill="#000"/><rect x="0" y="4" width="4" height="1" fill="#000"/><rect x="1" y="5" width="3" height="1" fill="#000"/><rect x="2" y="6" width="2" height="1" fill="#000"/><rect x="3" y="7" width="1" height="1" fill="#000"/></svg>
<div class="a" style="left:162px;top:551px;width:49px;height:15px;background:#eeeeee"></div>
<div class="a" style="left:162px;top:551px;width:49px;height:1px;background:#666666"></div>
<div class="a" style="left:162px;top:552px;width:49px;height:1px;background:#fff"></div>
<div class="a" style="left:211px;top:551px;width:16px;height:15px;background:linear-gradient(to bottom,#fff 0px,#f0f0f0 6px,#dcdce0 14px)"></div>
<div class="a" style="left:211px;top:551px;width:16px;height:1px;background:#666666"></div>
<div class="a" style="left:211px;top:551px;width:1px;height:15px;background:#666666"></div>
<div class="a" style="left:212px;top:552px;width:1px;height:14px;background:#fff"></div>
<div class="a" style="left:212px;top:552px;width:15px;height:1px;background:#fff"></div>
<svg class="a" style="left:218px;top:555px" width="4" height="8" shape-rendering="crispEdges"><rect x="0" y="0" width="1" height="1" fill="#000"/><rect x="0" y="1" width="2" height="1" fill="#000"/><rect x="0" y="2" width="3" height="1" fill="#000"/><rect x="0" y="3" width="4" height="1" fill="#000"/><rect x="0" y="4" width="4" height="1" fill="#000"/><rect x="0" y="5" width="3" height="1" fill="#000"/><rect x="0" y="6" width="2" height="1" fill="#000"/><rect x="0" y="7" width="1" height="1" fill="#000"/></svg>
<div class="a" style="left:27px;top:551px;width:135px;height:15px;background:linear-gradient(to bottom,#cddaed 0px,#bccde4 35%,#a5b9d4 100%)"></div>
<svg class="a" style="left:27px;top:551px" width="135" height="15" shape-rendering="crispEdges"><defs><pattern id="th1" x="3" y="3" width="4" height="4" patternUnits="userSpaceOnUse"><rect x="0" y="0" width="1" height="1" fill="#d8e4f2"/><rect x="2" y="2" width="1" height="1" fill="#d8e4f2"/><rect x="1" y="1" width="1" height="1" fill="#6f86a8"/><rect x="3" y="3" width="1" height="1" fill="#6f86a8"/></pattern></defs><rect x="3" y="3" width="129" height="10" fill="url(#th1)"/><rect x="0" y="0" width="135" height="1" fill="#6b87a8"/><rect x="0" y="0" width="1" height="15" fill="#6b87a8"/><rect x="1" y="1" width="134" height="1" fill="#e4ecf6"/><rect x="1" y="1" width="1" height="14" fill="#e4ecf6"/></svg>
<div class="a" style="left:235px;top:31px;width:1px;height:542px;background:#f8f8f8"></div>
<div class="a" style="left:236px;top:31px;width:1px;height:543px;background:#666666"></div>
<div class="a" style="left:237px;top:31px;width:1px;height:542px;background:#fafafa"></div>
<div class="a" style="left:242px;top:38px;width:974px;height:33px;background:linear-gradient(to bottom,#ffffff 0px,#f7f7f7 1px,#f4f4f4 3px,#efefef 5px,#efefef 17px,#e9e9ea 19px,#e6e6e8 21px,#dedfe3 23px,#dadbe1 26px,#d6d7de 30px,#d3d4db 33px)"></div>
<div class="a" style="left:242px;top:36px;width:974px;height:1px;background:#555555"></div>
<div class="a" style="left:242px;top:37px;width:974px;height:1px;background:#5e5e5e"></div>
<div class="a" style="left:243px;top:37px;width:1px;height:1px;background:#d0d0d0"></div>
<svg class="a" style="left:252px;top:48px" width="13" height="15" shape-rendering="crispEdges"><rect x="0" y="0" width="11" height="13" fill="#555"/><rect x="1" y="1" width="9" height="11" fill="#fff"/><rect x="2" y="2" width="7" height="1" fill="#888"/><rect x="2" y="4" width="7" height="1" fill="#888"/><rect x="2" y="6" width="7" height="1" fill="#888"/><rect x="2" y="8" width="7" height="1" fill="#888"/><rect x="2" y="10" width="7" height="1" fill="#888"/><rect x="11" y="1" width="1" height="13" fill="#000"/><rect x="1" y="13" width="11" height="1" fill="#000"/></svg>
<svg class="a" style="left:323px;top:47px" width="18" height="16" shape-rendering="crispEdges"><path d="M6 1 H15 V2 H14 V4 H13 V7 H4 V4 H5 V2 H6 Z" fill="#000"/><path d="M7 2 H14 V3 H13 V5 H12 V6 H5 V4 H6 Z" fill="#fff"/><rect x="7" y="3" width="5" height="1" fill="#999"/><rect x="6" y="5" width="5" height="1" fill="#999"/><path d="M3 7 H15 V8 H16 V14 H15 V15 H3 V14 H2 V13 H1 V9 H2 V8 H3 Z" fill="#000"/><rect x="3" y="8" width="12" height="1" fill="#fff"/><rect x="2" y="9" width="13" height="5" fill="#e4e4e4"/><rect x="3" y="14" width="12" height="1" fill="#000"/><rect x="2" y="9" width="1" height="4" fill="#fff"/><rect x="13" y="10" width="1" height="1" fill="#888"/><rect x="12" y="11" width="1" height="1" fill="#888"/><rect x="14" y="9" width="1" height="1" fill="#888"/><rect x="11" y="12" width="1" height="1" fill="#888"/></svg>
<svg class="a" style="left:380px;top:46px" width="19" height="18" shape-rendering="crispEdges"><rect x="4" y="1" width="1" height="1" fill="#3020ff"/><rect x="5" y="1" width="1" height="1" fill="#3020ff"/><rect x="3" y="2" width="1" height="1" fill="#3020ff"/><rect x="4" y="2" width="1" height="1" fill="#3020ff"/><rect x="5" y="2" width="1" height="1" fill="#3020ff"/><rect x="6" y="2" width="1" height="1" fill="#3020ff"/><rect x="3" y="3" width="1" height="1" fill="#3020ff"/><rect x="6" y="3" width="1" height="1" fill="#3020ff"/><rect x="2" y="4" width="1" height="1" fill="#3020ff"/><rect x="3" y="4" width="1" height="1" fill="#3020ff"/><rect x="4" y="4" width="1" height="1" fill="#3020ff"/><rect x="5" y="4" width="1" height="1" fill="#3020ff"/><rect x="6" y="4" width="1" height="1" fill="#3020ff"/><rect x="7" y="4" width="1" height="1" fill="#3020ff"/><rect x="2" y="5" width="1" height="1" fill="#3020ff"/><rect x="7" y="5" width="1" height="1" fill="#3020ff"/><rect x="1" y="6" width="1" height="1" fill="#3020ff"/><rect x="2" y="6" width="1" height="1" fill="#3020ff"/><rect x="7" y="6" width="1" height="1" fill="#3020ff"/><rect x="8" y="6" width="1" height="1" fill="#3020ff"/><rect x="1" y="7" width="1" height="1" fill="#3020ff"/><rect x="2" y="7" width="1" height="1" fill="#3020ff"/><rect x="3" y="7" width="1" height="1" fill="#3020ff"/><rect x="6" y="7" width="1" height="1" fill="#3020ff"/><rect x="7" y="7" width="1" height="1" fill="#3020ff"/><rect x="8" y="7" width="1" height="1" fill="#3020ff"/><rect x="4" y="6" width="1" height="1" fill="#000"/><rect x="5" y="6" width="1" height="1" fill="#000"/><rect x="6" y="6" width="1" height="1" fill="#000"/><rect x="7" y="6" width="1" height="1" fill="#000"/><rect x="8" y="6" width="1" height="1" fill="#000"/><rect x="4" y="7" width="1" height="1" fill="#000"/><rect x="5" y="7" width="1" height="1" fill="#000"/><rect x="8" y="7" width="1" height="1" fill="#000"/><rect x="9" y="7" width="1" height="1" fill="#000"/><rect x="4" y="8" width="1" height="1" fill="#000"/><rect x="5" y="8" width="1" height="1" fill="#000"/><rect x="8" y="8" width="1" height="1" fill="#000"/><rect x="9" y="8" width="1" height="1" fill="#000"/><rect x="4" y="9" width="1" height="1" fill="#000"/><rect x="5" y="9" width="1" height="1" fill="#000"/><rect x="6" y="9" width="1" height="1" fill="#000"/><rect x="7" y="9" width="1" height="1" fill="#000"/><rect x="8" y="9" width="1" height="1" fill="#000"/><rect x="4" y="10" width="1" height="1" fill="#000"/><rect x="5" y="10" width="1" height="1" fill="#000"/><rect x="8" y="10" width="1" height="1" fill="#000"/><rect x="9" y="10" width="1" height="1" fill="#000"/><rect x="4" y="11" width="1" height="1" fill="#000"/><rect x="5" y="11" width="1" height="1" fill="#000"/><rect x="8" y="11" width="1" height="1" fill="#000"/><rect x="9" y="11" width="1" height="1" fill="#000"/><rect x="4" y="12" width="1" height="1" fill="#000"/><rect x="5" y="12" width="1" height="1" fill="#000"/><rect x="6" y="12" width="1" height="1" fill="#000"/><rect x="7" y="12" width="1" height="1" fill="#000"/><rect x="8" y="12" width="1" height="1" fill="#000"/><rect x="8" y="10" width="1" height="1" fill="#ff0000"/><rect x="9" y="10" width="1" height="1" fill="#ff0000"/><rect x="10" y="10" width="1" height="1" fill="#ff0000"/><rect x="11" y="10" width="1" height="1" fill="#ff0000"/><rect x="7" y="11" width="1" height="1" fill="#ff0000"/><rect x="8" y="11" width="1" height="1" fill="#ff0000"/><rect x="11" y="11" width="1" height="1" fill="#ff0000"/><rect x="12" y="11" width="1" height="1" fill="#ff0000"/><rect x="6" y="12" width="1" height="1" fill="#ff0000"/><rect x="7" y="12" width="1" height="1" fill="#ff0000"/><rect x="6" y="13" width="1" height="1" fill="#ff0000"/><rect x="7" y="13" width="1" height="1" fill="#ff0000"/><rect x="6" y="14" width="1" height="1" fill="#ff0000"/><rect x="7" y="14" width="1" height="1" fill="#ff0000"/><rect x="7" y="15" width="1" height="1" fill="#ff0000"/><rect x="8" y="15" width="1" height="1" fill="#ff0000"/><rect x="11" y="15" width="1" height="1" fill="#ff0000"/><rect x="12" y="15" width="1" height="1" fill="#ff0000"/><rect x="8" y="16" width="1" height="1" fill="#ff0000"/><rect x="9" y="16" width="1" height="1" fill="#ff0000"/><rect x="10" y="16" width="1" height="1" fill="#ff0000"/><rect x="11" y="16" width="1" height="1" fill="#ff0000"/><rect x="14" y="1" width="1" height="14" fill="#000"/><rect x="12" y="12" width="5" height="1" fill="#000"/><rect x="13" y="13" width="3" height="1" fill="#000"/><rect x="13" y="14" width="3" height="1" fill="#000"/><rect x="14" y="15" width="1" height="2" fill="#000"/></svg>
<svg class="a" style="left:489px;top:48px" width="17" height="15" shape-rendering="crispEdges"><path d="M2 0 H8 V1 H9 V2 H16 V14 H0 V2 H1 V1 H2 Z" fill="#000"/><rect x="2" y="1" width="6" height="1" fill="#ffff00"/><rect x="1" y="3" width="14" height="10" fill="#ffff00"/><rect x="1" y="3" width="1" height="1" fill="#fff"/><rect x="3" y="3" width="1" height="1" fill="#fff"/><rect x="5" y="3" width="1" height="1" fill="#fff"/><rect x="7" y="3" width="1" height="1" fill="#fff"/><rect x="9" y="3" width="1" height="1" fill="#fff"/><rect x="11" y="3" width="1" height="1" fill="#fff"/><rect x="13" y="3" width="1" height="1" fill="#fff"/><rect x="2" y="4" width="1" height="1" fill="#fff"/><rect x="4" y="4" width="1" height="1" fill="#fff"/><rect x="6" y="4" width="1" height="1" fill="#fff"/><rect x="8" y="4" width="1" height="1" fill="#fff"/><rect x="10" y="4" width="1" height="1" fill="#fff"/><rect x="12" y="4" width="1" height="1" fill="#fff"/><rect x="14" y="4" width="1" height="1" fill="#fff"/><rect x="1" y="5" width="1" height="1" fill="#fff"/><rect x="3" y="5" width="1" height="1" fill="#fff"/><rect x="5" y="5" width="1" height="1" fill="#fff"/><rect x="7" y="5" width="1" height="1" fill="#fff"/><rect x="9" y="5" width="1" height="1" fill="#fff"/><rect x="11" y="5" width="1" height="1" fill="#fff"/><rect x="13" y="5" width="1" height="1" fill="#fff"/><rect x="2" y="6" width="1" height="1" fill="#fff"/><rect x="4" y="6" width="1" height="1" fill="#fff"/><rect x="6" y="6" width="1" height="1" fill="#fff"/><rect x="8" y="6" width="1" height="1" fill="#fff"/><rect x="10" y="6" width="1" height="1" fill="#fff"/><rect x="12" y="6" width="1" height="1" fill="#fff"/><rect x="14" y="6" width="1" height="1" fill="#fff"/><rect x="1" y="7" width="1" height="1" fill="#fff"/><rect x="3" y="7" width="1" height="1" fill="#fff"/><rect x="5" y="7" width="1" height="1" fill="#fff"/><rect x="7" y="7" width="1" height="1" fill="#fff"/><rect x="9" y="7" width="1" height="1" fill="#fff"/><rect x="11" y="7" width="1" height="1" fill="#fff"/><rect x="13" y="7" width="1" height="1" fill="#fff"/><rect x="2" y="8" width="1" height="1" fill="#fff"/><rect x="4" y="8" width="1" height="1" fill="#fff"/><rect x="6" y="8" width="1" height="1" fill="#fff"/><rect x="8" y="8" width="1" height="1" fill="#fff"/><rect x="10" y="8" width="1" height="1" fill="#fff"/><rect x="12" y="8" width="1" height="1" fill="#fff"/><rect x="14" y="8" width="1" height="1" fill="#fff"/><rect x="1" y="9" width="1" height="1" fill="#fff"/><rect x="3" y="9" width="1" height="1" fill="#fff"/><rect x="5" y="9" width="1" height="1" fill="#fff"/><rect x="7" y="9" width="1" height="1" fill="#fff"/><rect x="9" y="9" width="1" height="1" fill="#fff"/><rect x="11" y="9" width="1" height="1" fill="#fff"/><rect x="13" y="9" width="1" height="1" fill="#fff"/><rect x="2" y="10" width="1" height="1" fill="#fff"/><rect x="4" y="10" width="1" height="1" fill="#fff"/><rect x="6" y="10" width="1" height="1" fill="#fff"/><rect x="8" y="10" width="1" height="1" fill="#fff"/><rect x="10" y="10" width="1" height="1" fill="#fff"/><rect x="12" y="10" width="1" height="1" fill="#fff"/><rect x="14" y="10" width="1" height="1" fill="#fff"/><rect x="1" y="11" width="1" height="1" fill="#fff"/><rect x="3" y="11" width="1" height="1" fill="#fff"/><rect x="5" y="11" width="1" height="1" fill="#fff"/><rect x="7" y="11" width="1" height="1" fill="#fff"/><rect x="9" y="11" width="1" height="1" fill="#fff"/><rect x="11" y="11" width="1" height="1" fill="#fff"/><rect x="13" y="11" width="1" height="1" fill="#fff"/><rect x="2" y="12" width="1" height="1" fill="#fff"/><rect x="4" y="12" width="1" height="1" fill="#fff"/><rect x="6" y="12" width="1" height="1" fill="#fff"/><rect x="8" y="12" width="1" height="1" fill="#fff"/><rect x="10" y="12" width="1" height="1" fill="#fff"/><rect x="12" y="12" width="1" height="1" fill="#fff"/><rect x="14" y="12" width="1" height="1" fill="#fff"/><path d="M5 5 H8 V6 H6 V8 H5 Z" fill="#000"/><path d="M6.5 6.5 L9.5 9.5 L9.5 11.5" fill="none" stroke="#000" stroke-width="1.2" shape-rendering="auto"/></svg>
<svg class="a" style="left:565px;top:47px" width="17" height="16" shape-rendering="crispEdges"><rect x="0" y="0" width="16" height="16" fill="#000"/><rect x="1" y="1" width="14" height="14" fill="#fff"/><rect x="1" y="1" width="14" height="2" fill="#2222aa"/><rect x="1" y="5" width="14" height="1" fill="#c8c8c8"/><rect x="1" y="8" width="14" height="1" fill="#c8c8c8"/><rect x="1" y="11" width="14" height="1" fill="#c8c8c8"/><rect x="4" y="3" width="2" height="11" fill="#000"/><rect x="10" y="3" width="2" height="11" fill="#000"/></svg>
<svg class="a" style="left:694px;top:46px" width="16" height="18"><path d="M6 6.5 H8.5 Q11.5 6.5 12.5 9.5" fill="none" stroke="#000" stroke-width="2"/><path d="M2.5 6.5 L7 2.5 V10.5 Z" fill="#000"/><path d="M3.5 9.5 Q4.5 12.5 7.5 12.5 H10" fill="none" stroke="#000" stroke-width="2"/><path d="M13.5 12.5 L9 8.5 V16.5 Z" fill="#000"/></svg>
<svg class="a" style="left:799px;top:48px" width="13" height="15" shape-rendering="crispEdges"><rect x="0" y="0" width="11" height="13" fill="#555"/><rect x="1" y="1" width="9" height="11" fill="#fff"/><rect x="2" y="2" width="7" height="1" fill="#888"/><rect x="2" y="4" width="7" height="1" fill="#888"/><rect x="2" y="6" width="7" height="1" fill="#888"/><rect x="2" y="8" width="7" height="1" fill="#888"/><rect x="2" y="10" width="7" height="1" fill="#888"/><rect x="11" y="1" width="1" height="13" fill="#000"/><rect x="1" y="13" width="11" height="1" fill="#000"/></svg>
<svg class="a" style="left:874px;top:50px" width="6" height="10" shape-rendering="crispEdges"><rect x="1" y="0" width="1" height="1" fill="#0000ee"/><rect x="2" y="0" width="1" height="1" fill="#0000ee"/><rect x="3" y="0" width="1" height="1" fill="#0000ee"/><rect x="4" y="0" width="1" height="1" fill="#0000ee"/><rect x="0" y="1" width="1" height="1" fill="#0000ee"/><rect x="1" y="1" width="1" height="1" fill="#0000ee"/><rect x="4" y="1" width="1" height="1" fill="#0000ee"/><rect x="5" y="1" width="1" height="1" fill="#0000ee"/><rect x="0" y="2" width="1" height="1" fill="#0000ee"/><rect x="1" y="2" width="1" height="1" fill="#0000ee"/><rect x="4" y="2" width="1" height="1" fill="#0000ee"/><rect x="5" y="2" width="1" height="1" fill="#0000ee"/><rect x="4" y="3" width="1" height="1" fill="#0000ee"/><rect x="5" y="3" width="1" height="1" fill="#0000ee"/><rect x="3" y="4" width="1" height="1" fill="#0000ee"/><rect x="4" y="4" width="1" height="1" fill="#0000ee"/><rect x="2" y="5" width="1" height="1" fill="#0000ee"/><rect x="3" y="5" width="1" height="1" fill="#0000ee"/><rect x="2" y="6" width="1" height="1" fill="#0000ee"/><rect x="3" y="6" width="1" height="1" fill="#0000ee"/><rect x="2" y="8" width="1" height="1" fill="#0000ee"/><rect x="3" y="8" width="1" height="1" fill="#0000ee"/><rect x="2" y="9" width="1" height="1" fill="#0000ee"/><rect x="3" y="9" width="1" height="1" fill="#0000ee"/></svg>
<div class="a" style="left:242px;top:71px;width:974px;height:1px;background:#666666"></div>
<div class="a" style="left:242px;top:71px;width:1px;height:423px;background:#666666"></div>
<div class="a" style="left:1215px;top:71px;width:1px;height:423px;background:#666666"></div>
<div class="a" style="left:242px;top:493px;width:974px;height:1px;background:#666666"></div>
<div class="a" style="left:1216px;top:72px;width:1px;height:423px;background:#fff"></div>
<div class="a" style="left:243px;top:494px;width:974px;height:1px;background:#fff"></div>
<div class="a" style="left:1200px;top:72px;width:15px;height:16px;background:#eeeeee"></div>
<div class="a" style="left:243px;top:72px;width:957px;height:16px;overflow:hidden"><div class="hc" style="left:0px;width:14px"></div><div style="position:absolute;left:0px;top:0;width:1px;height:16px;background:#fff"></div><div style="position:absolute;left:0px;top:0;width:13px;height:1px;background:#fff"></div><div style="position:absolute;left:13px;top:0;width:1px;height:16px;background:#666"></div><div style="position:absolute;left:2px;top:15px;width:11px;height:1px;background:#666"></div><div style="position:absolute;left:1px;top:15px;width:1px;height:1px;background:#ececf2"></div><div class="hc" style="left:14px;width:50px"></div><div style="position:absolute;left:14px;top:0;width:1px;height:16px;background:#fff"></div><div style="position:absolute;left:14px;top:0;width:49px;height:1px;background:#fff"></div><div style="position:absolute;left:63px;top:0;width:1px;height:16px;background:#666"></div><div style="position:absolute;left:16px;top:15px;width:47px;height:1px;background:#666"></div><div style="position:absolute;left:15px;top:15px;width:1px;height:1px;background:#ececf2"></div><div class="hc" style="left:64px;width:65px"></div><div style="position:absolute;left:64px;top:0;width:1px;height:16px;background:#fff"></div><div style="position:absolute;left:64px;top:0;width:64px;height:1px;background:#fff"></div><div style="position:absolute;left:128px;top:0;width:1px;height:16px;background:#666"></div><div style="position:absolute;left:66px;top:15px;width:62px;height:1px;background:#666"></div><div style="position:absolute;left:65px;top:15px;width:1px;height:1px;background:#ececf2"></div><div class="hc" style="left:129px;width:50px"></div><div style="position:absolute;left:129px;top:0;width:1px;height:16px;background:#fff"></div><div style="position:absolute;left:129px;top:0;width:49px;height:1px;background:#fff"></div><div style="position:absolute;left:178px;top:0;width:1px;height:16px;background:#666"></div><div style="position:absolute;left:131px;top:15px;width:47px;height:1px;background:#666"></div><div style="position:absolute;left:130px;top:15px;width:1px;height:1px;background:#ececf2"></div><div class="hc" style="left:179px;width:69px"></div><div style="position:absolute;left:179px;top:0;width:1px;height:16px;background:#fff"></div><div style="position:absolute;left:179px;top:0;width:68px;height:1px;background:#fff"></div><div style="position:absolute;left:247px;top:0;width:1px;height:16px;background:#666"></div><div style="position:absolute;left:181px;top:15px;width:66px;height:1px;background:#666"></div><div style="position:absolute;left:180px;top:15px;width:1px;height:1px;background:#ececf2"></div><div class="hc" style="left:248px;width:40px"></div><div style="position:absolute;left:248px;top:0;width:1px;height:16px;background:#fff"></div><div style="position:absolute;left:248px;top:0;width:39px;height:1px;background:#fff"></div><div style="position:absolute;left:287px;top:0;width:1px;height:16px;background:#666"></div><div style="position:absolute;left:250px;top:15px;width:37px;height:1px;background:#666"></div><div style="position:absolute;left:249px;top:15px;width:1px;height:1px;background:#ececf2"></div><div class="hc" style="left:288px;width:66px"></div><div style="position:absolute;left:288px;top:0;width:1px;height:16px;background:#fff"></div><div style="position:absolute;left:288px;top:0;width:65px;height:1px;background:#fff"></div><div style="position:absolute;left:353px;top:0;width:1px;height:16px;background:#666"></div><div style="position:absolute;left:290px;top:15px;width:63px;height:1px;background:#666"></div><div style="position:absolute;left:289px;top:15px;width:1px;height:1px;background:#ececf2"></div><div class="hc" style="left:354px;width:64px"></div><div style="position:absolute;left:354px;top:0;width:1px;height:16px;background:#fff"></div><div style="position:absolute;left:354px;top:0;width:63px;height:1px;background:#fff"></div><div style="position:absolute;left:417px;top:0;width:1px;height:16px;background:#666"></div><div style="position:absolute;left:356px;top:15px;width:61px;height:1px;background:#666"></div><div style="position:absolute;left:355px;top:15px;width:1px;height:1px;background:#ececf2"></div><div class="hc" style="left:418px;width:83px"></div><div style="position:absolute;left:418px;top:0;width:1px;height:16px;background:#fff"></div><div style="position:absolute;left:418px;top:0;width:82px;height:1px;background:#fff"></div><div style="position:absolute;left:500px;top:0;width:1px;height:16px;background:#666"></div><div style="position:absolute;left:420px;top:15px;width:80px;height:1px;background:#666"></div><div style="position:absolute;left:419px;top:15px;width:1px;height:1px;background:#ececf2"></div><div class="hc" style="left:501px;width:76px"></div><div style="position:absolute;left:501px;top:0;width:1px;height:16px;background:#fff"></div><div style="position:absolute;left:501px;top:0;width:75px;height:1px;background:#fff"></div><div style="position:absolute;left:576px;top:0;width:1px;height:16px;background:#666"></div><div style="position:absolute;left:503px;top:15px;width:73px;height:1px;background:#666"></div><div style="position:absolute;left:502px;top:15px;width:1px;height:1px;background:#ececf2"></div><div class="hc" style="left:577px;width:117px"></div><div style="position:absolute;left:577px;top:0;width:1px;height:16px;background:#fff"></div><div style="position:absolute;left:577px;top:0;width:116px;height:1px;background:#fff"></div><div style="position:absolute;left:693px;top:0;width:1px;height:16px;background:#666"></div><div style="position:absolute;left:579px;top:15px;width:114px;height:1px;background:#666"></div><div style="position:absolute;left:578px;top:15px;width:1px;height:1px;background:#ececf2"></div><div class="hc" style="left:694px;width:116px"></div><div style="position:absolute;left:694px;top:0;width:1px;height:16px;background:#fff"></div><div style="position:absolute;left:694px;top:0;width:115px;height:1px;background:#fff"></div><div style="position:absolute;left:809px;top:0;width:1px;height:16px;background:#666"></div><div style="position:absolute;left:696px;top:15px;width:113px;height:1px;background:#666"></div><div style="position:absolute;left:695px;top:15px;width:1px;height:1px;background:#ececf2"></div><div class="hc" style="left:810px;width:247px"></div><div style="position:absolute;left:810px;top:0;width:1px;height:16px;background:#fff"></div><div style="position:absolute;left:810px;top:0;width:246px;height:1px;background:#fff"></div><div style="position:absolute;left:1056px;top:0;width:1px;height:16px;background:#666"></div><div style="position:absolute;left:812px;top:15px;width:244px;height:1px;background:#666"></div><div style="position:absolute;left:811px;top:15px;width:1px;height:1px;background:#ececf2"></div><svg style="position:absolute;left:952px;top:7px" width="6" height="4"><path d="M0 4 L3 0.5 L6 4 Z" fill="#000"/></svg><svg style="position:absolute;left:0;top:0" width="957" height="16" font-family="Liberation Sans" font-size="12" filter="url(#crisp)"><text x="3 6 9" y="13">...</text><text x="21 30 37 44 51" y="13">NodeA</text><text x="70 73 80 83 90 94 97 104 110 117" y="13">InterfaceA</text><text x="136 145 152 159 166" y="13">NodeZ</text><text x="187 190 197 200 207 211 214 221 227 234" y="13">InterfaceZ</text><text x="260 269 272" y="13">Dir</text><text x="292 300 307 314 321 330 333 340 343" y="13">Bandwidth</text><text x="356 363 367 374 381 387 390 397 403 410" y="13">Trunk Type</text><text x="419 422 429 432 435 438 449 456 460 466 469 472 479 486 493" y="13">Intf Worst Load</text><text x="503 506 513 516 519 522 533 540 544 550 553 556 565 568 571" y="13">Intf Worst Util</text><text x="579 588 595 605 612 619 626 629 640 647 651 657 660 663 670 677 684" y="13">Demand Worst Load</text><text x="700 709 716 726 733 740 747 750 761 768 772 778 781 784 793 796 799" y="13">Demand Worst Util</text><text x="811 822 829 833 839 842 845 854 857 860 863 867 870 877 880 883 886 890 893 902 909 919 926 933 940" y="13">Worst Diff(Intf - Demand)</text></svg></div>
<div class="a" style="left:243px;top:88px;width:957px;height:390px;overflow:hidden;background:#fff"><div style="position:absolute;left:0;top:0;width:957px;height:390px;background:repeating-linear-gradient(to bottom,#fff 0px,#fff 15px,#a0a0a0 15px,#a0a0a0 16px)"></div><div style="position:absolute;left:14px;top:0;width:1px;height:390px;background:#a0a0a0"></div><div style="position:absolute;left:64px;top:0;width:1px;height:390px;background:#a0a0a0"></div><div style="position:absolute;left:129px;top:0;width:1px;height:390px;background:#a0a0a0"></div><div style="position:absolute;left:179px;top:0;width:1px;height:390px;background:#a0a0a0"></div><div style="position:absolute;left:248px;top:0;width:1px;height:390px;background:#a0a0a0"></div><div style="position:absolute;left:288px;top:0;width:1px;height:390px;background:#a0a0a0"></div><div style="position:absolute;left:354px;top:0;width:1px;height:390px;background:#a0a0a0"></div><div style="position:absolute;left:418px;top:0;width:1px;height:390px;background:#a0a0a0"></div><div style="position:absolute;left:501px;top:0;width:1px;height:390px;background:#a0a0a0"></div><div style="position:absolute;left:577px;top:0;width:1px;height:390px;background:#a0a0a0"></div><div style="position:absolute;left:694px;top:0;width:1px;height:390px;background:#a0a0a0"></div><div style="position:absolute;left:810px;top:0;width:1px;height:390px;background:#a0a0a0"></div><svg style="position:absolute;left:0;top:0" width="957" height="390" font-family="Liberation Sans" font-size="12" filter="url(#crisp)"><text x="1 4 7" y="12">...</text><text x="16 25 34" y="12">COL</text><text x="66 74 83 91 98 101" y="12">POS1/3</text><text x="131 140 147 154" y="12">CT63</text><text x="181 189 198 206 213 216" y="12">POS3/2</text><text x="250 258 265" y="12">A2Z</text><text x="290 297 304 311 314 321 328 335" y="12">622.080M</text><text x="356 365 374 381" y="12">OC12</text><text x="420 427 434 441 444 451 458 465" y="12">173.152M</text><text x="503 510 513 520" y="12">0.28</text><text x="579 586 593 600 603 610 617 624" y="12">184.931M</text><text x="696 703 706 713" y="12">0.30</text><text x="812 816 823 830 833 840 847" y="12">-11.78M</text><text x="1 4 7" y="28">...</text><text x="16 24 31" y="28">B1H</text><text x="66 74 83 91 98 105 108" y="28">POS11/0</text><text x="131 140 148" y="28">CAL</text><text x="181 189 198 206 213 216" y="28">POS0/3</text><text x="250 257 264" y="28">Z2A</text><text x="290 297 300 307 314 321" y="28">2.488G</text><text x="356 365 374 381" y="28">OC48</text><text x="420 427 434 437 444 451 458" y="28">90.207M</text><text x="503 510 513 520" y="28">0.04</text><text x="579 586 593 600 603 610 617 624" y="28">101.656M</text><text x="696 703 706 713" y="28">0.04</text><text x="812 816 823 830 833 840 847" y="28">-11.45M</text><text x="1 4 7" y="44">...</text><text x="16 25 33" y="44">CPH</text><text x="66 74 83 91 98 101" y="44">POS5/1</text><text x="131 140 146 155" y="44">CJOB</text><text x="181 189 198 206 213 216" y="44">POS5/1</text><text x="250 258 265" y="44">A2Z</text><text x="290 297 300 307 314 321" y="44">2.488G</text><text x="356 365 374 381" y="44">OC48</text><text x="420 427 430 437 444 451" y="44">1.281M</text><text x="503 510 513 520" y="44">0.00</text><text x="579 586 593 596 603 610 617" y="44">12.153M</text><text x="696 703 706 713" y="44">0.00</text><text x="812 816 823 830 833 840 847" y="44">-10.87M</text><text x="1 4 7" y="60">...</text><text x="16 25 32" y="60">C12</text><text x="66 74 83 91 98 101" y="60">POS0/1</text><text x="131 140 148 157" y="60">CPRO</text><text x="181 189 198 206 213 216" y="60">POS6/0</text><text x="250 258 265" y="60">A2Z</text><text x="290 297 300 307 314 321" y="60">2.488G</text><text x="356 365 374 381" y="60">OC48</text><text x="420 427 434 441 444 451 458 465" y="60">111.675M</text><text x="503 510 513 520" y="60">0.04</text><text x="579 586 593 600 603 610 617 624" y="60">120.564M</text><text x="696 703 706 713" y="60">0.05</text><text x="812 816 823 826 833 840" y="60">-8.89M</text><text x="1 4 7" y="76">...</text><text x="16 25 34 42" y="76">CREV</text><text x="66 74 83 91 98 101" y="76">POS2/0</text><text x="131 140 147" y="76">C2J</text><text x="181 189 198 206 213 216" y="76">POS0/0</text><text x="250 258 265" y="76">A2Z</text><text x="290 297 300 307 314 321" y="76">2.488G</text><text x="356 365 374 381" y="76">OC48</text><text x="579 586 589 596 603 610" y="76">8.889M</text><text x="696 703 706 713" y="76">0.00</text><text x="812 816 823 826 833 840" y="76">-8.89M</text><text x="1 4 7" y="92">...</text><text x="16 25 32 39" y="92">CT12</text><text x="66 74 83 91 98 101" y="92">POS2/0</text><text x="131 140 149 157 164" y="92">CHA14</text><text x="181 189 198 206 213 216" y="92">POS1/0</text><text x="250 258 265" y="92">A2Z</text><text x="290 297 304 311 314 321 328 335" y="92">622.080M</text><text x="356 365 374 381" y="92">OC12</text><text x="420 427 434 441 444 451 458 465" y="92">122.891M</text><text x="503 510 513 520" y="92">0.20</text><text x="579 586 593 600 603 610 617 624" y="92">131.060M</text><text x="696 703 706 713" y="92">0.21</text><text x="812 816 823 826 833 840" y="92">-8.17M</text><text x="1 4 7" y="108">...</text><text x="16 25 32" y="108">C1C</text><text x="66 74 83 91 98 101" y="108">POS5/0</text><text x="131 140 148" y="108">CAB</text><text x="181 189 198 206 213 216" y="108">POS5/0</text><text x="250 257 264" y="108">Z2A</text><text x="290 297 300 307 314 321" y="108">2.488G</text><text x="356 365 374 381" y="108">OC48</text><text x="420 427 434 437 444 451 458" y="108">82.571K</text><text x="503 510 513 520" y="108">0.00</text><text x="579 586 589 596 603 610" y="108">8.132M</text><text x="696 703 706 713" y="108">0.00</text><text x="812 816 823 826 833 840" y="108">-8.05M</text><text x="1 4 7" y="124">...</text><text x="16 25 33" y="124">CPH</text><text x="66 74 83 91 98 105 108" y="124">POS15/0</text><text x="131 140 148 157" y="124">CPRO</text><text x="181 189 198 206 213 220 223" y="124">POS13/0</text><text x="250 258 265" y="124">A2Z</text><text x="290 297 300 307 314 321" y="124">2.488G</text><text x="356 365 374 381" y="124">OC48</text><text x="420 427 434 437 444 451 458" y="124">96.392M</text><text x="503 510 513 520" y="124">0.04</text><text x="579 586 593 600 603 610 617 624" y="124">104.352M</text><text x="696 703 706 713" y="124">0.04</text><text x="812 816 823 826 833 840" y="124">-7.96M</text><text x="1 4 7" y="140">...</text><text x="16 25 33 42" y="140">CSO9</text><text x="66 74 83 91 98 101" y="140">POS1/1</text><text x="131 140 149 156 163" y="140">COT17</text><text x="181 189 198 206 213 216" y="140">POS3/0</text><text x="250 257 264" y="140">Z2A</text><text x="290 297 304 311 314 321 328 335" y="140">622.080M</text><text x="356 365 374 381" y="140">OC12</text><text x="420 427 434 441 444 451 458 465" y="140">174.921M</text><text x="503 510 513 520" y="140">0.28</text><text x="579 586 593 600 603 610 617 624" y="140">181.684M</text><text x="696 703 706 713" y="140">0.29</text><text x="812 816 823 826 833 840" y="140">-6.76M</text><text x="1 4 7" y="156">...</text><text x="16 25 34 41 48" y="156">COT17</text><text x="66 74 83 91 98 101" y="156">POS3/1</text><text x="131 140 149 156 163" y="156">COT63</text><text x="181 189 198 206 213 216" y="156">POS2/0</text><text x="250 257 264" y="156">Z2A</text><text x="290 297 304 311 314 321 328 335" y="156">622.080M</text><text x="356 365 374 381" y="156">OC12</text><text x="420 427 430 437 444 451" y="156">8.954K</text><text x="503 510 513 520" y="156">0.00</text><text x="579 586 589 596 603 610" y="156">6.772M</text><text x="696 703 706 713" y="156">0.01</text><text x="812 816 823 826 833 840" y="156">-6.76M</text><text x="1 4 7" y="172">...</text><text x="16 25 32 39" y="172">CT12</text><text x="66 74 83 91 98 101" y="172">POS5/1</text><text x="131 140 149 157" y="172">CGEN</text><text x="181 189 198 206 213 216" y="172">POS1/3</text><text x="250 257 264" y="172">Z2A</text><text x="290 297 304 311 314 321 328 335" y="172">155.520M</text><text x="356 365 374" y="172">OC3</text><text x="420 427 434 437 444 451 458" y="172">59.013M</text><text x="503 510 513 520" y="172">0.38</text><text x="579 586 593 596 603 610 617" y="172">65.315M</text><text x="696 703 706 713" y="172">0.42</text><text x="812 816 823 826 833 840" y="172">-6.30M</text><text x="1 4 7" y="188">...</text><text x="16 25 32 39" y="188">CT63</text><text x="66 74 83 91 98 101" y="188">POS6/3</text><text x="131 140 149" y="188">CRU</text><text x="181 189 198 206 213 216" y="188">POS1/3</text><text x="250 257 264" y="188">Z2A</text><text x="290 297 304 311 314 321 328 335" y="188">155.520M</text><text x="356 365 374" y="188">OC3</text><text x="420 427 434 437 444 451 458" y="188">56.160M</text><text x="503 510 513 520" y="188">0.36</text><text x="579 586 593 596 603 610 617" y="188">62.256M</text><text x="696 703 706 713" y="188">0.40</text><text x="812 816 823 826 833 840" y="188">-6.10M</text><text x="1 4 7" y="204">...</text><text x="16 25 34 42" y="204">CRS9</text><text x="66 74 83 91 98 101" y="204">POS0/0</text><text x="131 140 148" y="204">CPH</text><text x="181 189 198 206 213 220 223" y="204">POS10/3</text><text x="250 258 265" y="204">A2Z</text><text x="290 297 300 307 314 321" y="204">2.488G</text><text x="356 365 374 381" y="204">OC48</text><text x="579 586 589 596 603 610" y="204">6.072M</text><text x="696 703 706 713" y="204">0.00</text><text x="812 816 823 826 833 840" y="204">-6.07M</text><text x="1 4 7" y="220">...</text><text x="16 25 34 41 48" y="220">COT63</text><text x="66 74 83 91 98 101" y="220">POS2/1</text><text x="131 140 151 154" y="220">CWIN</text><text x="181 189 198 206 213 216" y="220">POS1/1</text><text x="250 257 264" y="220">Z2A</text><text x="290 297 304 311 314 321 328 335" y="220">155.520M</text><text x="356 365 374" y="220">OC3</text><text x="420 427 434 441 444 451 458 465" y="220">181.647M</text><text x="503 510 513 520" y="220">1.17</text><text x="579 586 593 600 603 610 617 624" y="220">187.235M</text><text x="696 703 706 713" y="220">1.20</text><text x="812 816 823 826 833 840" y="220">-5.59M</text><text x="1 4 7" y="236">...</text><text x="16 25 33 42" y="236">CSO9</text><text x="66 74 83 91 98 101" y="236">POS1/0</text><text x="131 140 151 154" y="236">CWIN</text><text x="181 189 198 206 213 216" y="236">POS1/0</text><text x="250 258 265" y="236">A2Z</text><text x="290 297 304 311 314 321 328 335" y="236">622.080M</text><text x="356 365 374 381" y="236">OC12</text><text x="420 427 430 437 444 451" y="236">2.206M</text><text x="503 510 513 520" y="236">0.00</text><text x="579 586 589 596 603 610" y="236">7.779M</text><text x="696 703 706 713" y="236">0.01</text><text x="812 816 823 826 833 840" y="236">-5.57M</text><text x="1 4 7" y="252">...</text><text x="16 25 32 39" y="252">CT12</text><text x="66 74 83 91 98 101" y="252">POS2/0</text><text x="131 140 149 157 164" y="252">CHA14</text><text x="181 189 198 206 213 216" y="252">POS1/0</text><text x="250 257 264" y="252">Z2A</text><text x="290 297 304 311 314 321 328 335" y="252">622.080M</text><text x="356 365 374 381" y="252">OC12</text><text x="420 427 434 441 444 451 458 465" y="252">146.905M</text><text x="503 510 513 520" y="252">0.24</text><text x="579 586 593 600 603 610 617 624" y="252">152.347M</text><text x="696 703 706 713" y="252">0.24</text><text x="812 816 823 826 833 840" y="252">-5.44M</text><text x="1 4 7" y="268">...</text><text x="16 24 31" y="268">B2V</text><text x="66 74 83 91 98 101" y="268">POS2/0</text><text x="131 140 151" y="268">CW8</text><text x="181 189 198 206 213 216" y="268">POS3/0</text><text x="250 257 264" y="268">Z2A</text><text x="290 297 300 307 314 321" y="268">2.488G</text><text x="356 365 374 381" y="268">OC48</text><text x="420 427 434 437 444 451 458" y="268">18.532M</text><text x="503 510 513 520" y="268">0.01</text><text x="579 586 593 596 603 610 617" y="268">23.768M</text><text x="696 703 706 713" y="268">0.01</text><text x="812 816 823 826 833 840" y="268">-5.24M</text><text x="1 4 7" y="284">...</text><text x="16 25 34 42" y="284">CREV</text><text x="66 74 83 91 98 101" y="284">POS1/3</text><text x="131 140 149 157 166" y="284">CDEUT</text><text x="181 189 198 206 213 216" y="284">POS1/0</text><text x="250 258 265" y="284">A2Z</text><text x="290 297 300 307 314 321" y="284">2.488G</text><text x="356 365 374 381" y="284">OC48</text><text x="579 586 589 596 603 610" y="284">4.683M</text><text x="696 703 706 713" y="284">0.00</text><text x="812 816 823 826 833 840" y="284">-4.68M</text><text x="1 4 7" y="300">...</text><text x="16 25 32 39" y="300">C123</text><text x="66 74 83 91 98 101" y="300">POS1/0</text><text x="131 140 148 155" y="300">CAT2</text><text x="181 189 198 206 213 216" y="300">POS0/0</text><text x="250 257 264" y="300">Z2A</text><text x="290 297 300 307 314 321" y="300">2.488G</text><text x="356 365 374 381" y="300">OC48</text><text x="420 427 434 441 444 451 458 465" y="300">387.232M</text><text x="503 510 513 520" y="300">0.16</text><text x="579 586 593 600 603 610 617 624" y="300">391.140M</text><text x="696 703 706 713" y="300">0.16</text><text x="812 816 823 826 833 840" y="300">-3.91M</text><text x="1 4 7" y="316">...</text><text x="16 25 32 39" y="316">C123</text><text x="66 74 83 91 98 101" y="316">POS0/1</text><text x="131 140 149 160 167" y="316">COW23</text><text x="181 189 198 206 213 216" y="316">POS0/1</text><text x="250 258 265" y="316">A2Z</text><text x="290 297 300 307 314 321" y="316">2.488G</text><text x="356 365 374 381" y="316">OC48</text><text x="420 427 434 437 444 451 458" y="316">16.560M</text><text x="503 510 513 520" y="316">0.01</text><text x="579 586 593 596 603 610 617" y="316">19.730M</text><text x="696 703 706 713" y="316">0.01</text><text x="812 816 823 826 833 840" y="316">-3.17M</text><text x="1 4 7" y="332">...</text><text x="16 24 31" y="332">B1N</text><text x="66 74 83 91 98 101" y="332">POS3/0</text><text x="131 140 147" y="332">C83</text><text x="181 189 198 206 213 216" y="332">POS0/1</text><text x="250 258 265" y="332">A2Z</text><text x="290 297 300 307 314 321" y="332">2.488G</text><text x="356 365 374 381" y="332">OC48</text><text x="420 427 434 441 444 451 458 465" y="332">576.774M</text><text x="503 510 513 520" y="332">0.23</text><text x="579 586 593 600 603 610 617 624" y="332">579.657M</text><text x="696 703 706 713" y="332">0.23</text><text x="812 816 823 826 833 840" y="332">-2.88M</text><text x="1 4 7" y="348">...</text><text x="16 25 34 43 50" y="348">COR99</text><text x="66 74 83 91 98 101" y="348">POS0/0</text><text x="131 140 148" y="348">CPH</text><text x="181 189 198 206 213 216" y="348">POS0/3</text><text x="250 257 264" y="348">Z2A</text><text x="290 297 300 307 314 321" y="348">2.488G</text><text x="356 365 374 381" y="348">OC48</text><text x="579 586 589 596 603 610" y="348">2.659M</text><text x="696 703 706 713" y="348">0.00</text><text x="812 816 823 826 833 840" y="348">-2.66M</text><text x="1 4 7" y="364">...</text><text x="16 25 32 39" y="364">CT12</text><text x="66 74 83 91 98 105 108" y="364">POS10/3</text><text x="131 140 149 158 165" y="364">CON14</text><text x="181 189 198 206 213 216" y="364">POS1/0</text><text x="250 257 264" y="364">Z2A</text><text x="290 297 304 311 314 321 328 335" y="364">622.080M</text><text x="356 365 374 381" y="364">OC12</text><text x="420 427 434 441 444 451 458 465" y="364">174.482M</text><text x="503 510 513 520" y="364">0.28</text><text x="579 586 593 600 603 610 617 624" y="364">176.108M</text><text x="696 703 706 713" y="364">0.28</text><text x="812 816 823 826 833 840" y="364">-1.63M</text><text x="1 4 7" y="380">...</text><text x="16 25 34" y="380">CRM</text><text x="66 74 83 91 98 101" y="380">POS2/1</text><text x="131 140 149" y="380">CCO</text><text x="181 189 198 206 213 216" y="380">POS1/2</text><text x="250 257 264" y="380">Z2A</text><text x="290 297 300 307 314 321" y="380">2.488G</text><text x="356 365 374 381" y="380">OC48</text><text x="579 586 589 596 603 610" y="380">1.584M</text><text x="696 703 706 713" y="380">0.00</text><text x="812 816 823 826 833 840" y="380">-1.58M</text><text x="1 4 7" y="396">...</text><text x="16 25 34" y="396">COC</text><text x="66 74 83 91 98 105 108" y="396">POS13/1</text><text x="131 140 148 156" y="396">CEST</text><text x="181 189 198 206 213 220 223" y="396">POS13/1</text><text x="250 257 264" y="396">Z2A</text><text x="290 297 304 311 314 321 328 335" y="396">622.080M</text><text x="356 365 374 381" y="396">OC12</text><text x="579 586 589 596 603 610" y="396">1.584M</text><text x="696 703 706 713" y="396">0.00</text><text x="812 816 823 826 833 840" y="396">-1.58M</text></svg></div>
<div class="a" style="left:1200px;top:88px;width:15px;height:390px;background:#eeeeee"></div>
<div class="a" style="left:1200px;top:88px;width:1px;height:390px;background:#666666"></div>
<div class="a" style="left:1201px;top:104px;width:1px;height:358px;background:#808080"></div>
<div class="a" style="left:1202px;top:104px;width:1px;height:358px;background:#f8f8f8"></div>
<div class="a" style="left:1214px;top:104px;width:1px;height:358px;background:#f4f4f4"></div>
<div class="a" style="left:1201px;top:88px;width:14px;height:1px;background:#fafafa"></div>
<div class="a" style="left:1215px;top:88px;width:1px;height:1px;background:#f0f0f0"></div>
<div class="a" style="left:1201px;top:89px;width:14px;height:14px;background:linear-gradient(to right,#f6f6f6 0px,#eeeeee 6px,#d8d8dc 14px)"></div>
<div class="a" style="left:1201px;top:103px;width:14px;height:1px;background:#666666"></div>
<svg class="a" style="left:1204px;top:93px" width="8" height="4" shape-rendering="crispEdges"><rect x="3" y="0" width="2" height="1" fill="#000"/><rect x="2" y="1" width="4" height="1" fill="#000"/><rect x="1" y="2" width="6" height="1" fill="#000"/><rect x="0" y="3" width="8" height="1" fill="#000"/></svg>
<div class="a" style="left:1201px;top:463px;width:14px;height:14px;background:linear-gradient(to right,#f6f6f6 0px,#eeeeee 6px,#d8d8dc 14px)"></div>
<div class="a" style="left:1201px;top:462px;width:14px;height:1px;background:#666666"></div>
<svg class="a" style="left:1204px;top:469px" width="8" height="4" shape-rendering="crispEdges"><rect x="3" y="3" width="2" height="1" fill="#000"/><rect x="2" y="2" width="4" height="1" fill="#000"/><rect x="1" y="1" width="6" height="1" fill="#000"/><rect x="0" y="0" width="8" height="1" fill="#000"/></svg>
<div class="a" style="left:1200px;top:320px;width:15px;height:43px;background:linear-gradient(to right,#cddaed 0px,#bccde4 35%,#a5b9d4 100%)"></div>
<svg class="a" style="left:1200px;top:320px" width="15" height="43" shape-rendering="crispEdges"><defs><pattern id="th2" x="3" y="3" width="4" height="4" patternUnits="userSpaceOnUse"><rect x="0" y="0" width="1" height="1" fill="#d8e4f2"/><rect x="2" y="2" width="1" height="1" fill="#d8e4f2"/><rect x="1" y="1" width="1" height="1" fill="#6f86a8"/><rect x="3" y="3" width="1" height="1" fill="#6f86a8"/></pattern></defs><rect x="3" y="3" width="9" height="38" fill="url(#th2)"/><rect x="0" y="0" width="15" height="1" fill="#6b87a8"/><rect x="0" y="0" width="1" height="43" fill="#6b87a8"/><rect x="1" y="1" width="14" height="1" fill="#e4ecf6"/><rect x="1" y="1" width="1" height="42" fill="#e4ecf6"/><rect x="0" y="42" width="15" height="1" fill="#8096b6"/></svg>
<div class="a" style="left:243px;top:478px;width:957px;height:15px;background:#eeeeee"></div>
<div class="a" style="left:243px;top:478px;width:957px;height:1px;background:#666666"></div>
<div class="a" style="left:243px;top:479px;width:15px;height:14px;background:linear-gradient(to bottom,#fff 0px,#f0f0f0 5px,#d8d8dc 14px)"></div>
<svg class="a" style="left:248px;top:482px" width="4" height="8" shape-rendering="crispEdges"><rect x="3" y="0" width="1" height="1" fill="#000"/><rect x="2" y="1" width="2" height="1" fill="#000"/><rect x="1" y="2" width="3" height="1" fill="#000"/><rect x="0" y="3" width="4" height="1" fill="#000"/><rect x="0" y="4" width="4" height="1" fill="#000"/><rect x="1" y="5" width="3" height="1" fill="#000"/><rect x="2" y="6" width="2" height="1" fill="#000"/><rect x="3" y="7" width="1" height="1" fill="#000"/></svg>
<div class="a" style="left:258px;top:478px;width:353px;height:15px;background:linear-gradient(to bottom,#cddaed 0px,#bccde4 35%,#a5b9d4 100%)"></div>
<svg class="a" style="left:258px;top:478px" width="353" height="15" shape-rendering="crispEdges"><defs><pattern id="th3" x="3" y="3" width="4" height="4" patternUnits="userSpaceOnUse"><rect x="0" y="0" width="1" height="1" fill="#d8e4f2"/><rect x="2" y="2" width="1" height="1" fill="#d8e4f2"/><rect x="1" y="1" width="1" height="1" fill="#6f86a8"/><rect x="3" y="3" width="1" height="1" fill="#6f86a8"/></pattern></defs><rect x="3" y="3" width="347" height="10" fill="url(#th3)"/><rect x="0" y="0" width="353" height="1" fill="#6b87a8"/><rect x="0" y="0" width="1" height="15" fill="#6b87a8"/><rect x="1" y="1" width="352" height="1" fill="#e4ecf6"/><rect x="1" y="1" width="1" height="14" fill="#e4ecf6"/></svg>
<div class="a" style="left:611px;top:479px;width:573px;height:1px;background:#fff"></div>
<div class="a" style="left:1184px;top:478px;width:16px;height:15px;background:linear-gradient(to bottom,#fff 0px,#f0f0f0 5px,#d8d8dc 14px)"></div>
<div class="a" style="left:1184px;top:478px;width:16px;height:1px;background:#666666"></div>
<div class="a" style="left:1184px;top:478px;width:1px;height:15px;background:#666666"></div>
<div class="a" style="left:1185px;top:479px;width:1px;height:14px;background:#fff"></div>
<svg class="a" style="left:1191px;top:482px" width="4" height="8" shape-rendering="crispEdges"><rect x="0" y="0" width="1" height="1" fill="#000"/><rect x="0" y="1" width="2" height="1" fill="#000"/><rect x="0" y="2" width="3" height="1" fill="#000"/><rect x="0" y="3" width="4" height="1" fill="#000"/><rect x="0" y="4" width="4" height="1" fill="#000"/><rect x="0" y="5" width="3" height="1" fill="#000"/><rect x="0" y="6" width="2" height="1" fill="#000"/><rect x="0" y="7" width="1" height="1" fill="#000"/></svg>
<div class="a" style="left:1200px;top:478px;width:15px;height:15px;background:#eeeeee"></div>
<div class="a" style="left:1200px;top:478px;width:1px;height:15px;background:#666666"></div>
<div class="a" style="left:1201px;top:477px;width:14px;height:1px;background:#666666"></div>
<div class="a" style="left:313px;top:499px;width:287px;height:18px;background:#fff"></div>
<div class="a" style="left:312px;top:498px;width:288px;height:1px;background:#666666"></div>
<div class="a" style="left:312px;top:498px;width:1px;height:19px;background:#666666"></div>
<div class="a" style="left:599px;top:498px;width:1px;height:19px;background:#666666"></div>
<div class="a" style="left:312px;top:516px;width:288px;height:1px;background:#666666"></div>
<div class="a" style="left:313px;top:499px;width:288px;height:1px;background:#fff"></div>
<div class="a" style="left:313px;top:499px;width:1px;height:19px;background:#fff"></div>
<div class="a" style="left:600px;top:499px;width:1px;height:19px;background:#fff"></div>
<div class="a" style="left:313px;top:517px;width:288px;height:1px;background:#fff"></div>
<div class="a" style="left:312px;top:517px;width:1px;height:1px;background:#eeeeee"></div>
<div class="a" style="left:313px;top:516px;width:1px;height:1px;background:#eeeeee"></div>
<div class="a" style="left:600px;top:498px;width:1px;height:1px;background:#eeeeee"></div>
<div class="a" style="left:599px;top:499px;width:1px;height:1px;background:#eeeeee"></div>
<svg class="a" style="left:314px;top:504px" width="5" height="5" shape-rendering="crispEdges"><rect x="2" y="0" width="1" height="3" fill="#000"/><rect x="0" y="1" width="5" height="1" fill="#000"/><rect x="1" y="3" width="1" height="1" fill="#000"/><rect x="3" y="3" width="1" height="1" fill="#000"/></svg>
<div class="a" style="left:602px;top:496px;width:130px;height:23px;background:linear-gradient(to bottom,#fafafa 0px,#efefef 2px,#efefef 55%,#e4e4e6 62%,#dadbe1 72%,#d8d9e0 88%,#e0e0e5 100%)"></div>
<div class="a" style="left:601px;top:495px;width:132px;height:1px;background:#666666"></div>
<div class="a" style="left:601px;top:495px;width:1px;height:25px;background:#666666"></div>
<div class="a" style="left:732px;top:495px;width:1px;height:25px;background:#666666"></div>
<div class="a" style="left:601px;top:519px;width:132px;height:1px;background:#666666"></div>
<div class="a" style="left:602px;top:496px;width:132px;height:1px;background:#fff"></div>
<div class="a" style="left:602px;top:496px;width:1px;height:25px;background:#fff"></div>
<div class="a" style="left:733px;top:496px;width:1px;height:25px;background:#fff"></div>
<div class="a" style="left:602px;top:520px;width:132px;height:1px;background:#fff"></div>
<div class="a" style="left:601px;top:520px;width:1px;height:1px;background:#eeeeee"></div>
<div class="a" style="left:602px;top:519px;width:1px;height:1px;background:#eeeeee"></div>
<div class="a" style="left:733px;top:495px;width:1px;height:1px;background:#eeeeee"></div>
<div class="a" style="left:732px;top:496px;width:1px;height:1px;background:#eeeeee"></div>
<svg class="a" style="left:638px;top:500px" width="17" height="17" shape-rendering="crispEdges"><rect x="0" y="0" width="10" height="1" fill="#8a8a8a"/><rect x="0" y="0" width="1" height="15" fill="#8a8a8a"/><rect x="1" y="1" width="11" height="14" fill="#fff"/><rect x="9" y="1" width="1" height="3" fill="#bbb"/><rect x="10" y="3" width="2" height="1" fill="#bbb"/><rect x="10" y="1" width="1" height="1" fill="#888"/><rect x="11" y="2" width="1" height="1" fill="#888"/><rect x="12" y="3" width="1" height="13" fill="#000"/><rect x="1" y="15" width="12" height="1" fill="#000"/><rect x="3" y="2" width="4" height="1" fill="#a0a0a0"/><rect x="3" y="4" width="4" height="1" fill="#a0a0a0"/><rect x="3" y="6" width="3" height="1" fill="#a0a0a0"/><rect x="3" y="8" width="2" height="1" fill="#a0a0a0"/><rect x="3" y="10" width="2" height="1" fill="#a0a0a0"/><rect x="3" y="12" width="2" height="1" fill="#a0a0a0"/><circle cx="10" cy="8.5" r="3.6" fill="#fff" stroke="#0a0a80" stroke-width="1.3" shape-rendering="auto"/><rect x="8" y="7" width="1" height="2" fill="#00e0f0"/><rect x="9" y="6" width="1" height="1" fill="#00e0f0"/><path d="M12.5 11.5 L15 14" stroke="#0a0a80" stroke-width="2.2" shape-rendering="auto"/></svg>
<div class="a" style="left:735px;top:496px;width:129px;height:23px;background:linear-gradient(to bottom,#fafafa 0px,#efefef 2px,#efefef 55%,#e4e4e6 62%,#dadbe1 72%,#d8d9e0 88%,#e0e0e5 100%)"></div>
<div class="a" style="left:734px;top:495px;width:131px;height:1px;background:#666666"></div>
<div class="a" style="left:734px;top:495px;width:1px;height:25px;background:#666666"></div>
<div class="a" style="left:864px;top:495px;width:1px;height:25px;background:#666666"></div>
<div class="a" style="left:734px;top:519px;width:131px;height:1px;background:#666666"></div>
<div class="a" style="left:735px;top:496px;width:131px;height:1px;background:#fff"></div>
<div class="a" style="left:735px;top:496px;width:1px;height:25px;background:#fff"></div>
<div class="a" style="left:865px;top:496px;width:1px;height:25px;background:#fff"></div>
<div class="a" style="left:735px;top:520px;width:131px;height:1px;background:#fff"></div>
<div class="a" style="left:734px;top:520px;width:1px;height:1px;background:#eeeeee"></div>
<div class="a" style="left:735px;top:519px;width:1px;height:1px;background:#eeeeee"></div>
<div class="a" style="left:865px;top:495px;width:1px;height:1px;background:#eeeeee"></div>
<div class="a" style="left:864px;top:496px;width:1px;height:1px;background:#eeeeee"></div>
<div class="a" style="left:245px;top:534px;width:86px;height:19px;background:linear-gradient(to bottom,#fafafa 0px,#efefef 2px,#efefef 55%,#e4e4e6 62%,#dadbe1 72%,#d8d9e0 88%,#e0e0e5 100%)"></div>
<div class="a" style="left:244px;top:533px;width:88px;height:1px;background:#999999"></div>
<div class="a" style="left:244px;top:533px;width:1px;height:21px;background:#999999"></div>
<div class="a" style="left:331px;top:533px;width:1px;height:21px;background:#999999"></div>
<div class="a" style="left:244px;top:553px;width:88px;height:1px;background:#999999"></div>
<div class="a" style="left:245px;top:534px;width:86px;height:1px;background:#fff"></div>
<div class="a" style="left:245px;top:534px;width:1px;height:19px;background:#fff"></div>
<svg class="a" style="left:281px;top:538px" width="15" height="12"><path d="M0 6 L7 0 V12 Z M7 6 L14 0 V12 Z M6 5.5 H8 V6.5 H6 Z" fill="#777"/></svg>
<div class="a" style="left:334px;top:534px;width:79px;height:19px;background:linear-gradient(to bottom,#fafafa 0px,#efefef 2px,#efefef 55%,#e4e4e6 62%,#dadbe1 72%,#d8d9e0 88%,#e0e0e5 100%)"></div>
<div class="a" style="left:333px;top:533px;width:81px;height:1px;background:#999999"></div>
<div class="a" style="left:333px;top:533px;width:1px;height:21px;background:#999999"></div>
<div class="a" style="left:413px;top:533px;width:1px;height:21px;background:#999999"></div>
<div class="a" style="left:333px;top:553px;width:81px;height:1px;background:#999999"></div>
<div class="a" style="left:334px;top:534px;width:79px;height:1px;background:#fff"></div>
<div class="a" style="left:334px;top:534px;width:1px;height:19px;background:#fff"></div>
<svg class="a" style="left:371px;top:538px" width="8" height="12"><path d="M0 6 L7 0 V12 Z" fill="#777"/></svg>
<div class="a" style="left:416px;top:534px;width:79px;height:19px;background:linear-gradient(to bottom,#fafafa 0px,#efefef 2px,#efefef 55%,#e4e4e6 62%,#dadbe1 72%,#d8d9e0 88%,#e0e0e5 100%)"></div>
<div class="a" style="left:415px;top:533px;width:81px;height:1px;background:#666666"></div>
<div class="a" style="left:415px;top:533px;width:1px;height:21px;background:#666666"></div>
<div class="a" style="left:495px;top:533px;width:1px;height:21px;background:#666666"></div>
<div class="a" style="left:415px;top:553px;width:81px;height:1px;background:#666666"></div>
<div class="a" style="left:416px;top:534px;width:81px;height:1px;background:#fff"></div>
<div class="a" style="left:416px;top:534px;width:1px;height:21px;background:#fff"></div>
<div class="a" style="left:496px;top:534px;width:1px;height:21px;background:#fff"></div>
<div class="a" style="left:416px;top:554px;width:81px;height:1px;background:#fff"></div>
<div class="a" style="left:415px;top:554px;width:1px;height:1px;background:#eeeeee"></div>
<div class="a" style="left:416px;top:553px;width:1px;height:1px;background:#eeeeee"></div>
<div class="a" style="left:496px;top:533px;width:1px;height:1px;background:#eeeeee"></div>
<div class="a" style="left:495px;top:534px;width:1px;height:1px;background:#eeeeee"></div>
<svg class="a" style="left:453px;top:538px" width="8" height="12"><path d="M0 0 L7 6 L0 12 Z" fill="#000"/></svg>
<div class="a" style="left:498px;top:534px;width:86px;height:19px;background:linear-gradient(to bottom,#fafafa 0px,#efefef 2px,#efefef 55%,#e4e4e6 62%,#dadbe1 72%,#d8d9e0 88%,#e0e0e5 100%)"></div>
<div class="a" style="left:497px;top:533px;width:88px;height:1px;background:#666666"></div>
<div class="a" style="left:497px;top:533px;width:1px;height:21px;background:#666666"></div>
<div class="a" style="left:584px;top:533px;width:1px;height:21px;background:#666666"></div>
<div class="a" style="left:497px;top:553px;width:88px;height:1px;background:#666666"></div>
<div class="a" style="left:498px;top:534px;width:88px;height:1px;background:#fff"></div>
<div class="a" style="left:498px;top:534px;width:1px;height:21px;background:#fff"></div>
<div class="a" style="left:585px;top:534px;width:1px;height:21px;background:#fff"></div>
<div class="a" style="left:498px;top:554px;width:88px;height:1px;background:#fff"></div>
<div class="a" style="left:497px;top:554px;width:1px;height:1px;background:#eeeeee"></div>
<div class="a" style="left:498px;top:553px;width:1px;height:1px;background:#eeeeee"></div>
<div class="a" style="left:585px;top:533px;width:1px;height:1px;background:#eeeeee"></div>
<div class="a" style="left:584px;top:534px;width:1px;height:1px;background:#eeeeee"></div>
<svg class="a" style="left:534px;top:538px" width="15" height="12"><path d="M0 0 L7 6 L0 12 Z M7 0 L14 6 L7 12 Z" fill="#000"/></svg>
<div class="a" style="left:708px;top:535px;width:87px;height:18px;background:#fff"></div>
<div class="a" style="left:707px;top:534px;width:88px;height:1px;background:#666666"></div>
<div class="a" style="left:707px;top:534px;width:1px;height:19px;background:#666666"></div>
<div class="a" style="left:794px;top:534px;width:1px;height:19px;background:#666666"></div>
<div class="a" style="left:707px;top:552px;width:88px;height:1px;background:#666666"></div>
<div class="a" style="left:708px;top:535px;width:88px;height:1px;background:#fff"></div>
<div class="a" style="left:708px;top:535px;width:1px;height:19px;background:#fff"></div>
<div class="a" style="left:795px;top:535px;width:1px;height:19px;background:#fff"></div>
<div class="a" style="left:708px;top:553px;width:88px;height:1px;background:#fff"></div>
<div class="a" style="left:707px;top:553px;width:1px;height:1px;background:#eeeeee"></div>
<div class="a" style="left:708px;top:552px;width:1px;height:1px;background:#eeeeee"></div>
<div class="a" style="left:795px;top:534px;width:1px;height:1px;background:#eeeeee"></div>
<div class="a" style="left:794px;top:535px;width:1px;height:1px;background:#eeeeee"></div>
<div class="a" style="left:797px;top:532px;width:88px;height:23px;background:linear-gradient(to bottom,#fafafa 0px,#efefef 2px,#efefef 55%,#e4e4e6 62%,#dadbe1 72%,#d8d9e0 88%,#e0e0e5 100%)"></div>
<div class="a" style="left:796px;top:531px;width:90px;height:1px;background:#666666"></div>
<div class="a" style="left:796px;top:531px;width:1px;height:25px;background:#666666"></div>
<div class="a" style="left:885px;top:531px;width:1px;height:25px;background:#666666"></div>
<div class="a" style="left:796px;top:555px;width:90px;height:1px;background:#666666"></div>
<div class="a" style="left:797px;top:532px;width:90px;height:1px;background:#fff"></div>
<div class="a" style="left:797px;top:532px;width:1px;height:25px;background:#fff"></div>
<div class="a" style="left:886px;top:532px;width:1px;height:25px;background:#fff"></div>
<div class="a" style="left:797px;top:556px;width:90px;height:1px;background:#fff"></div>
<div class="a" style="left:796px;top:556px;width:1px;height:1px;background:#eeeeee"></div>
<div class="a" style="left:797px;top:555px;width:1px;height:1px;background:#eeeeee"></div>
<div class="a" style="left:886px;top:531px;width:1px;height:1px;background:#eeeeee"></div>
<div class="a" style="left:885px;top:532px;width:1px;height:1px;background:#eeeeee"></div>
<div class="a" style="left:1034px;top:535px;width:87px;height:18px;background:#fff"></div>
<div class="a" style="left:1033px;top:534px;width:88px;height:1px;background:#666666"></div>
<div class="a" style="left:1033px;top:534px;width:1px;height:19px;background:#666666"></div>
<div class="a" style="left:1120px;top:534px;width:1px;height:19px;background:#666666"></div>
<div class="a" style="left:1033px;top:552px;width:88px;height:1px;background:#666666"></div>
<div class="a" style="left:1034px;top:535px;width:88px;height:1px;background:#fff"></div>
<div class="a" style="left:1034px;top:535px;width:1px;height:19px;background:#fff"></div>
<div class="a" style="left:1121px;top:535px;width:1px;height:19px;background:#fff"></div>
<div class="a" style="left:1034px;top:553px;width:88px;height:1px;background:#fff"></div>
<div class="a" style="left:1033px;top:553px;width:1px;height:1px;background:#eeeeee"></div>
<div class="a" style="left:1034px;top:552px;width:1px;height:1px;background:#eeeeee"></div>
<div class="a" style="left:1121px;top:534px;width:1px;height:1px;background:#eeeeee"></div>
<div class="a" style="left:1120px;top:535px;width:1px;height:1px;background:#eeeeee"></div>
<div class="a" style="left:1123px;top:532px;width:90px;height:23px;background:linear-gradient(to bottom,#fafafa 0px,#efefef 2px,#efefef 55%,#e4e4e6 62%,#dadbe1 72%,#d8d9e0 88%,#e0e0e5 100%)"></div>
<div class="a" style="left:1122px;top:531px;width:92px;height:1px;background:#666666"></div>
<div class="a" style="left:1122px;top:531px;width:1px;height:25px;background:#666666"></div>
<div class="a" style="left:1213px;top:531px;width:1px;height:25px;background:#666666"></div>
<div class="a" style="left:1122px;top:555px;width:92px;height:1px;background:#666666"></div>
<div class="a" style="left:1123px;top:532px;width:92px;height:1px;background:#fff"></div>
<div class="a" style="left:1123px;top:532px;width:1px;height:25px;background:#fff"></div>
<div class="a" style="left:1214px;top:532px;width:1px;height:25px;background:#fff"></div>
<div class="a" style="left:1123px;top:556px;width:92px;height:1px;background:#fff"></div>
<div class="a" style="left:1122px;top:556px;width:1px;height:1px;background:#eeeeee"></div>
<div class="a" style="left:1123px;top:555px;width:1px;height:1px;background:#eeeeee"></div>
<div class="a" style="left:1214px;top:531px;width:1px;height:1px;background:#eeeeee"></div>
<div class="a" style="left:1213px;top:532px;width:1px;height:1px;background:#eeeeee"></div>
<svg class="a" style="left:0;top:0" width="1227" height="579" font-family="Liberation Sans" font-size="12" filter="url(#crisp)"><text transform="translate(0 22) scale(1 1.1) translate(0 -22)" x="31 40 47 54 61 65 69 73 84 91 98 105 112 119" y="22" font-size="13">Report Manager</text><text x="52 59 66 72 79 83 86 93 96 105 112 115 124 131 135 141 144 153 160 167 174 178 181" y="50">Layer 3 Network Reports</text><text x="72 80 87 90 97 100 108 111 120 123 129 136 140 146 149 152" y="66">Path &amp; Diversity</text><text x="72 80 87 94 101 104 107 116 123 129 132 135 145 152 155 158 161 165 173 180 183" y="82">Equal Cost Multi-Path</text><text x="72 81 88 96 99 108 115 125 132 139 146" y="98">CoS Demands</text><text x="72 80 84 91 97 100 106 109 116 123 130 137 140 149 152 155 158 161 167 174 177 180 187" y="114">Provisioned Utilization</text><text x="72 82 89 96 102 109 113 120 127 130 137 140 147 153 156 165 168 171 174 177 183 190 193 196 203" y="130">Measured Link Utilization</text><text x="72 81 88 98 105 112 116 123 130 133 140 143 150 156 159 168 171 174 177 180 184 193 200 210 217" y="146">Compared Link Util (Deman</text><text x="72 79 82 89 95 98 106 113 117 120 123 126 129 136" y="162">Link Partition</text><text x="72 81 88 96 99 106 109 116 122" y="178">CoS Links</text><text x="72 79 82 89 95 98 107 114 120" y="194">Link Cost</text><text x="72 79 82 89 95 98 107 113 120 127 134 137 146 153 159" y="210">Link Usage Cost</text><text x="72 81 88 98 105 112 119 122 131 138 144" y="226">Demand Cost</text><text x="72 80 84 91" y="242">Area</text><text x="72 80 89" y="258">BGP</text><text x="72 75 82 85 92 96 99 106 112 119 122 129 133 140 143 146 149" y="274">Interface Traffic</text><text x="72 80 88" y="290">VPN</text><text x="72 80 87 90 96" y="306">Voice</text><text x="72 81 88 95 102 105 112 116 123 126 129 132 138 141 149 156 166 176 183 187" y="322">Node Traffic Summary</text><text x="72 81 85 92 99" y="338">Group</text><text x="72 80 87 90 96 103 106 113 119 126 130 133 136" y="354">Voice over IP</text><text x="72 79 82 89 95 98 107 114 117 124 130 133 136 143 146 153 160 164 167 170 176 179 188 195 202 208 214" y="370">Link Rules Integrity Checks</text><text x="72 80 87 94 101 108" y="386">Subnet</text><text x="72 80 84 91 97 100 106 109 116 123 130 137 140 149 156 163 170 173 180 187 194" y="402">Provisioned Node Load</text><text x="72 82 89 96 102 109 113 120 127 130 139 146 153 160 163 170 177 184" y="418">Measured Node Load</text><text x="52 59 66 72 79 83 86 93 96 104 107 117 124 127 134 137 140 147 154 157 166 173 180 187 191 194" y="434">Layer 3 Simulation Reports</text><text x="52 61 68 75 78 81 88 95 99 106 109 112 119 126 129 138 145 152 159 163 166" y="450">Configuration Reports</text><text x="52 61 68 74 77 84 94 97 103 110 117 120 129 136 143 150 154 157" y="466">Customized Reports</text><text x="270 278 284 291 294 297 300" y="60">Expl...</text><text x="344 352 356 359 366" y="60">Print</text><text x="401 411 418 421 424 427 434 437 444 447 455 462 466 469 472 475" y="60">Multiple Sort...</text><text x="509 518 525 531 534 541 545" y="60">Restore</text><text x="585 593 600 603 610 616 619 622 631 638 641 648 658 665 671 674 677" y="60">Select Columns...</text><text x="714 723 730 734 743 750 757 764 768 775 778" y="60">Re-Generate</text><text x="817 825 831 835 838 845 848 851 854" y="60">Script...</text><text x="889 898 905 908" y="60">Help</text><text x="282 289 292 295 298 305 309" y="513">Filter:</text><text x="658 666 673 680 684 690" y="513">Search</text><text x="771 779 786 792 795 802 805 808 811 818 822 825 828" y="513">Adv Filter...</text><text x="900 907 910 917 920 927 934 941 944 951 954 960 967 970 977 983 990 997 1000 1004 1011 1014 1021 1024 1031 1038 1045 1052" y="513">1 ~ 200 displayed (1/3 page)</text><text x="606 615 622 625 628 635 638 645 652 659" y="549">Go to page</text><text x="833 842" y="549">Go</text><text x="907 914 917 924 931 937 940 948 955 959 962 970 977 984" y="549">Lines Per Page</text><text x="1035 1042 1049" y="549">200</text><text x="1159 1167 1174" y="549">Set</text></svg>
</body></html>
